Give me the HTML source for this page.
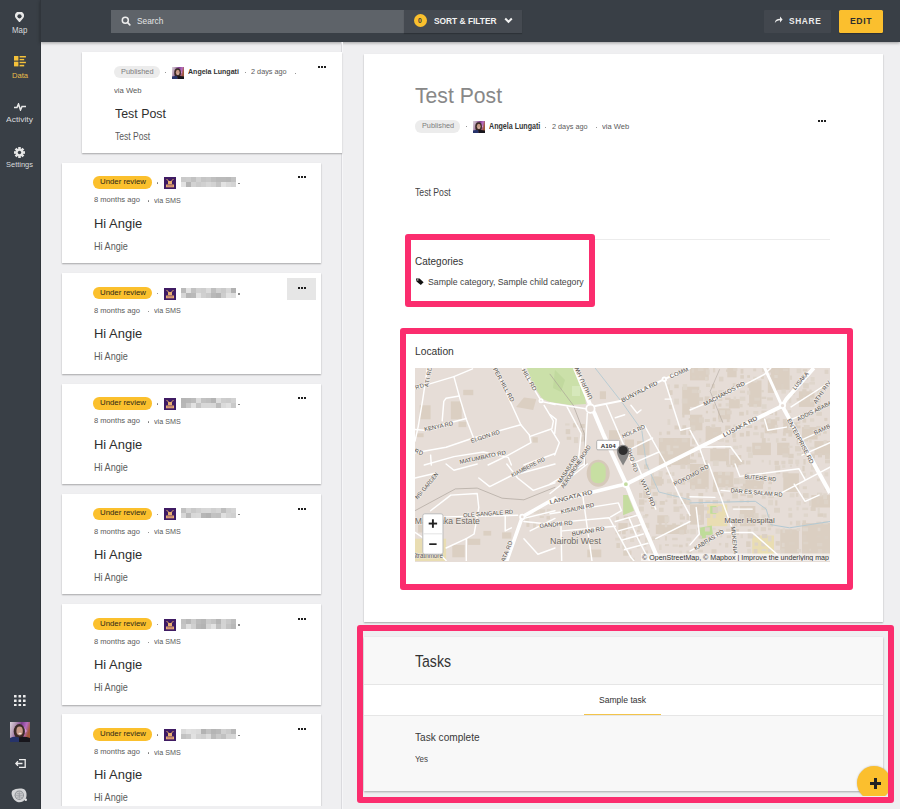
<!DOCTYPE html>
<html><head><meta charset="utf-8"><style>
*{margin:0;padding:0;box-sizing:border-box}
html,body{width:900px;height:809px;overflow:hidden;background:#efeff1;font-family:"Liberation Sans",sans-serif;position:relative}
.a{position:absolute}
.t{position:absolute;white-space:nowrap;line-height:1}
.card{position:absolute;background:#fff;box-shadow:0 1px 1.5px rgba(0,0,0,.3)}
.pink{position:absolute;border:6.5px solid #fb2d6e;border-radius:3px}
.dt{position:absolute;width:1.3px;height:1.3px;background:#777;border-radius:50%}
</style></head><body>
<div class="a" style="left:0;top:0;width:40px;height:809px;background:#393f46"></div>
<div class="a" style="left:40px;top:0;width:860px;height:42px;background:#393f46;box-shadow:0 1px 3px rgba(0,0,0,.35)"></div>
<div class="a" style="left:39.5px;top:0;width:1.2px;height:809px;background:#30353b"></div>
<div class="a" style="left:111px;top:10px;width:293px;height:23px;background:#5e6369"></div>
<svg class="a" style="left:121px;top:16px" width="10" height="10" viewBox="0 0 10 10"><circle cx="4.3" cy="4.3" r="3" fill="none" stroke="#eee" stroke-width="1.5"/><path d="M6.5 6.5 L8.8 8.8" stroke="#eee" stroke-width="1.7" stroke-linecap="round"/></svg>
<div class="t" style="left:136.70px;top:16.01px;font-size:9.81px;letter-spacing:0.000px;transform:scaleX(0.8453);transform-origin:0 0;color:#e4e5e6;">Search</div>
<div class="a" style="left:404px;top:10px;width:118px;height:23px;background:#454a51;box-shadow:0 1px 1px rgba(0,0,0,.2)"></div>
<div class="a" style="left:413.8px;top:14.3px;width:13px;height:13px;border-radius:50%;background:#fbc02d"></div>
<div class="t" style="left:418.40px;top:17.40px;font-size:7.27px;letter-spacing:0.000px;transform:scaleX(0.9421);transform-origin:0 0;color:#3a3a3a;font-weight:bold;">0</div>
<div class="t" style="left:433.70px;top:15.75px;font-size:9.63px;letter-spacing:0.000px;transform:scaleX(0.8688);transform-origin:0 0;color:#f2f2f2;font-weight:bold;">SORT &amp; FILTER</div>
<svg class="a" style="left:504px;top:17px" width="9" height="7" viewBox="0 0 9 7"><path d="M1.2 1.5 L4.5 4.8 L7.8 1.5" fill="none" stroke="#f2f2f2" stroke-width="2"/></svg>
<div class="a" style="left:764px;top:10px;width:67px;height:23px;background:#42474e;border-radius:1px"></div>
<svg class="a" style="left:774px;top:16px" width="9" height="8" viewBox="0 0 9 8"><path d="M0.8 7.2 C1 4 3 2.8 6 2.8 L6 0.6 L8.6 3.6 L6 6.4 L6 4.3 C3.8 4.3 2 5 0.8 7.2Z" fill="#eee"/></svg>
<div class="t" style="left:788.70px;top:16.86px;font-size:9.20px;letter-spacing:0.700px;transform:scaleX(0.9074);transform-origin:0 0;color:#ebebeb;font-weight:600;">SHARE</div>
<div class="a" style="left:839px;top:9.5px;width:44px;height:23.5px;background:#fbbf2e;border-radius:1.5px;box-shadow:0 1px 1px rgba(0,0,0,.25)"></div>
<div class="t" style="left:849.50px;top:15.57px;font-size:9.40px;letter-spacing:0.600px;transform:scaleX(0.9254);transform-origin:0 0;color:#2e2e2e;font-weight:bold;">EDIT</div>
<svg class="a" style="left:15.4px;top:11.6px" width="9" height="10.6" viewBox="0 0 9 10.6"><path d="M4.5 10.6 L1.1 6.4 A4.4 4.4 0 1 1 7.9 6.4 Z" fill="#e8e8e8"/><circle cx="4.5" cy="4.3" r="2.1" fill="#393f46"/></svg>
<div class="t" style="left:12.00px;top:27.47px;font-size:8.16px;letter-spacing:0.000px;transform:scaleX(0.9641);transform-origin:0 0;color:#d8dadc;">Map</div>
<svg class="a" style="left:13.9px;top:56.4px" width="12" height="10.4" viewBox="0 0 12 10.4" fill="#f5c23a"><rect x="0" y="0" width="4.4" height="4.6"/><rect x="0" y="5.7" width="4.4" height="4.7"/><rect x="5.6" y="0" width="6.3" height="1.5"/><rect x="5.6" y="2.9" width="4.6" height="1.4"/><rect x="5.6" y="5.8" width="6.3" height="1.4"/><rect x="5.6" y="8.8" width="4.6" height="1.6"/></svg>
<div class="t" style="left:11.70px;top:72.28px;font-size:7.88px;letter-spacing:0.000px;transform:scaleX(0.9661);transform-origin:0 0;color:#e9bd4a;">Data</div>
<svg class="a" style="left:14px;top:103px" width="12" height="8" viewBox="0 0 12 8"><path d="M0 4.5 L3 4.5 L4.5 1 L6.5 7 L8 3.5 L12 3.5" fill="none" stroke="#e8e8e8" stroke-width="1.5"/></svg>
<div class="t" style="left:6.10px;top:116.10px;font-size:7.99px;letter-spacing:0.000px;transform:scaleX(1.0633);transform-origin:0 0;color:#d8dadc;">Activity</div>
<svg class="a" style="left:14.3px;top:146.7px" width="11" height="11" viewBox="0 0 11 11"><g transform="translate(5.5 5.5)" fill="#e6e6e6"><circle r="3.8"/><rect x="-1.3" y="-5.5" width="2.6" height="11"/><rect x="-1.3" y="-5.5" width="2.6" height="11" transform="rotate(45)"/><rect x="-1.3" y="-5.5" width="2.6" height="11" transform="rotate(90)"/><rect x="-1.3" y="-5.5" width="2.6" height="11" transform="rotate(135)"/><circle r="1.7" fill="#393f46"/></g></svg>
<div class="t" style="left:6.10px;top:161.45px;font-size:7.84px;letter-spacing:0.000px;transform:scaleX(0.9531);transform-origin:0 0;color:#d8dadc;">Settings</div>
<svg class="a" style="left:14.2px;top:694.6px" width="11.6" height="11.6" viewBox="0 0 11.6 11.6" fill="#eee"><rect x="0.0" y="0.0" width="2.6" height="2.6" rx="0.3"/><rect x="0.0" y="4.5" width="2.6" height="2.6" rx="0.3"/><rect x="0.0" y="9.0" width="2.6" height="2.6" rx="0.3"/><rect x="4.5" y="0.0" width="2.6" height="2.6" rx="0.3"/><rect x="4.5" y="4.5" width="2.6" height="2.6" rx="0.3"/><rect x="4.5" y="9.0" width="2.6" height="2.6" rx="0.3"/><rect x="9.0" y="0.0" width="2.6" height="2.6" rx="0.3"/><rect x="9.0" y="4.5" width="2.6" height="2.6" rx="0.3"/><rect x="9.0" y="9.0" width="2.6" height="2.6" rx="0.3"/></svg>
<svg class="a" style="left:9.5px;top:722.2px" width="20" height="20" viewBox="0 0 20 20"><defs><linearGradient id="ag" x1="0" y1="0" x2="1" y2="0.3"><stop offset="0" stop-color="#dcd2dc"/><stop offset="0.25" stop-color="#b9a0b8"/><stop offset="0.55" stop-color="#7d3f8f"/><stop offset="0.8" stop-color="#b76cc0"/><stop offset="1" stop-color="#a0583a"/></linearGradient></defs><rect width="20" height="20" fill="url(#ag)"/><path d="M13 4 L17 9 L15 11 L12 8Z" fill="#d9a0dc" opacity=".8"/><ellipse cx="9.3" cy="9.5" rx="5.6" ry="7.5" fill="#3b2a26"/><ellipse cx="9.6" cy="9" rx="3.2" ry="4.4" fill="#c79a88"/><ellipse cx="10" cy="11.5" rx="1.6" ry="0.8" fill="#f2e4dc"/><path d="M0 20 L0 16 C3 14.5 6 14.5 9 15.5 L9 20Z" fill="#26336a"/><path d="M9 20 L9 15.5 C12 14.5 16 14.5 20 16 L20 20Z" fill="#17161c"/></svg>
<svg class="a" style="left:14.5px;top:758.8px" width="11" height="9" viewBox="0 0 11 9"><path d="M4 0.7 L10.2 0.7 L10.2 8.3 L4 8.3" fill="none" stroke="#eee" stroke-width="1.3"/><path d="M7.5 4.5 L0.8 4.5 M3 2.2 L0.8 4.5 L3 6.8" fill="none" stroke="#eee" stroke-width="1.3"/></svg>
<svg class="a" style="left:11px;top:787.5px" width="17" height="15" viewBox="0 0 17 15"><path d="M1.5 2.5 C4 0.6 9 0 12.5 1 C15.5 2.2 16.2 6.5 15 10 C13.5 13.5 9.5 14.8 6.5 14 C3.5 13 1.2 9.5 0.6 6 C0.5 4.5 0.8 3.3 1.5 2.5Z" fill="#d4d5d7"/><circle cx="8.3" cy="7.3" r="4.7" fill="#8d9196"/><circle cx="8.3" cy="7.3" r="3.7" fill="#c9cacc"/><path d="M4.8 7.3 H11.8 M8.3 3.8 V10.8 M5.6 5 C7 6 9.6 6 11 5 M5.6 9.6 C7 8.6 9.6 8.6 11 9.6" stroke="#8d9196" stroke-width="0.6" fill="none"/><circle cx="14.8" cy="11.8" r="1.2" fill="#e6e6e6"/></svg>
<div class="a" style="left:341px;top:42px;width:1.2px;height:767px;background:#dadade"></div><div class="a" style="left:342.2px;top:42px;width:1px;height:767px;background:#f6f6f8"></div>
<div class="card" style="left:82px;top:52px;width:259.5px;height:100.5px"></div>
<div class="a" style="left:114.2px;top:66.2px;width:45.5px;height:12.3px;border-radius:6.2px;background:#ececec"></div>
<div class="t" style="left:120.80px;top:68.15px;font-size:7.82px;letter-spacing:0.000px;transform:scaleX(0.9471);transform-origin:0 0;color:#7c7c7c;">Published</div>
<div class="dt" style="left:165.15px;top:71.95px"></div>
<svg class="a" style="left:172px;top:66.5px" width="12" height="12" viewBox="0 0 20 20"><defs><linearGradient id="ag" x1="0" y1="0" x2="1" y2="0.3"><stop offset="0" stop-color="#dcd2dc"/><stop offset="0.25" stop-color="#b9a0b8"/><stop offset="0.55" stop-color="#7d3f8f"/><stop offset="0.8" stop-color="#b76cc0"/><stop offset="1" stop-color="#a0583a"/></linearGradient></defs><rect width="20" height="20" fill="url(#ag)"/><path d="M13 4 L17 9 L15 11 L12 8Z" fill="#d9a0dc" opacity=".8"/><ellipse cx="9.3" cy="9.5" rx="5.6" ry="7.5" fill="#3b2a26"/><ellipse cx="9.6" cy="9" rx="3.2" ry="4.4" fill="#c79a88"/><ellipse cx="10" cy="11.5" rx="1.6" ry="0.8" fill="#f2e4dc"/><path d="M0 20 L0 16 C3 14.5 6 14.5 9 15.5 L9 20Z" fill="#26336a"/><path d="M9 20 L9 15.5 C12 14.5 16 14.5 20 16 L20 20Z" fill="#17161c"/></svg>
<div class="t" style="left:188.00px;top:67.79px;font-size:7.51px;letter-spacing:0.000px;transform:scaleX(0.9391);transform-origin:0 0;color:#333;font-weight:bold;">Angela Lungati</div>
<div class="dt" style="left:244.55px;top:72.05px"></div>
<div class="t" style="left:251.00px;top:68.42px;font-size:7.89px;letter-spacing:0.000px;transform:scaleX(0.9249);transform-origin:0 0;color:#5a5a5a;">2 days ago</div>
<div class="dt" style="left:294.85px;top:72.65px"></div>
<div class="a" style="left:318px;top:65.8px;width:2.2px;height:2.2px;background:#1e1e1e"></div><div class="a" style="left:321px;top:65.8px;width:2.2px;height:2.2px;background:#1e1e1e"></div><div class="a" style="left:324px;top:65.8px;width:2.2px;height:2.2px;background:#1e1e1e"></div>
<div class="t" style="left:114.20px;top:86.67px;font-size:7.39px;letter-spacing:0.000px;transform:scaleX(1.0388);transform-origin:0 0;color:#5a5a5a;">via Web</div>
<div class="t" style="left:114.70px;top:106.99px;font-size:13.69px;letter-spacing:0.000px;transform:scaleX(0.9054);transform-origin:0 0;color:#2e2e2e;">Test Post</div>
<div class="t" style="left:114.70px;top:132.43px;font-size:10.10px;letter-spacing:0.000px;transform:scaleX(0.8473);transform-origin:0 0;color:#5a5a5a;">Test Post</div>
<div class="card" style="left:61.5px;top:162.5px;width:259.5px;height:100.5px"></div>
<div class="a" style="left:93px;top:176.4px;width:59.2px;height:12.5px;border-radius:6.25px;background:#fbc02d"></div>
<div class="t" style="left:100.00px;top:178.01px;font-size:7.63px;letter-spacing:0.000px;transform:scaleX(1.0225);transform-origin:0 0;color:#2b2817;">Under review</div>
<div class="dt" style="left:156.75px;top:182.45px"></div>
<svg class="a" style="left:163.9px;top:177.0px" width="12" height="12" viewBox="0 0 12 12"><rect width="12" height="12" fill="#3f1b63"/><path d="M2.5 2 L5 4.5 M9.5 2 L7 4.5" stroke="#e0a868" stroke-width="1"/><rect x="4" y="4" width="4" height="3.2" fill="#e7b070"/><rect x="2" y="7.5" width="8" height="2.8" fill="#e7b070"/><rect x="3" y="8.3" width="6" height="1.1" fill="#c07870"/></svg>
<div class="a" style="left:180.5px;top:177.0px;width:55px;height:10px;overflow:hidden"><div class="a" style="left:0px;top:0px;width:5px;height:5px;background:rgb(202,202,202)"></div><div class="a" style="left:0px;top:5px;width:5px;height:5px;background:rgb(226,226,226)"></div><div class="a" style="left:5px;top:0px;width:5px;height:5px;background:rgb(204,204,204)"></div><div class="a" style="left:5px;top:5px;width:5px;height:5px;background:rgb(180,180,180)"></div><div class="a" style="left:10px;top:0px;width:5px;height:5px;background:rgb(194,194,194)"></div><div class="a" style="left:10px;top:5px;width:5px;height:5px;background:rgb(210,210,210)"></div><div class="a" style="left:15px;top:0px;width:5px;height:5px;background:rgb(209,209,209)"></div><div class="a" style="left:15px;top:5px;width:5px;height:5px;background:rgb(203,203,203)"></div><div class="a" style="left:20px;top:0px;width:5px;height:5px;background:rgb(197,197,197)"></div><div class="a" style="left:20px;top:5px;width:5px;height:5px;background:rgb(208,208,208)"></div><div class="a" style="left:25px;top:0px;width:5px;height:5px;background:rgb(200,200,200)"></div><div class="a" style="left:25px;top:5px;width:5px;height:5px;background:rgb(215,215,215)"></div><div class="a" style="left:30px;top:0px;width:5px;height:5px;background:rgb(191,191,191)"></div><div class="a" style="left:30px;top:5px;width:5px;height:5px;background:rgb(210,210,210)"></div><div class="a" style="left:35px;top:0px;width:5px;height:5px;background:rgb(186,186,186)"></div><div class="a" style="left:35px;top:5px;width:5px;height:5px;background:rgb(196,196,196)"></div><div class="a" style="left:40px;top:0px;width:5px;height:5px;background:rgb(186,186,186)"></div><div class="a" style="left:40px;top:5px;width:5px;height:5px;background:rgb(226,226,226)"></div><div class="a" style="left:45px;top:0px;width:5px;height:5px;background:rgb(184,184,184)"></div><div class="a" style="left:45px;top:5px;width:5px;height:5px;background:rgb(217,217,217)"></div><div class="a" style="left:50px;top:0px;width:5px;height:5px;background:rgb(194,194,194)"></div><div class="a" style="left:50px;top:5px;width:5px;height:5px;background:rgb(212,212,212)"></div></div>
<div class="dt" style="left:238.35px;top:182.95px"></div>
<div class="a" style="left:297.6px;top:176.3px;width:2.2px;height:2.2px;background:#1e1e1e"></div><div class="a" style="left:300.6px;top:176.3px;width:2.2px;height:2.2px;background:#1e1e1e"></div><div class="a" style="left:303.6px;top:176.3px;width:2.2px;height:2.2px;background:#1e1e1e"></div>
<div class="t" style="left:93.80px;top:196.34px;font-size:7.87px;letter-spacing:0.000px;transform:scaleX(0.9626);transform-origin:0 0;color:#5a5a5a;">8 months ago</div>
<div class="dt" style="left:147.65px;top:200.45px"></div>
<div class="t" style="left:154.10px;top:196.84px;font-size:7.75px;letter-spacing:0.000px;transform:scaleX(0.9253);transform-origin:0 0;color:#5a5a5a;">via SMS</div>
<div class="t" style="left:93.70px;top:216.68px;font-size:13.56px;letter-spacing:0.000px;transform:scaleX(0.9565);transform-origin:0 0;color:#2e2e2e;">Hi Angie</div>
<div class="t" style="left:93.70px;top:242.09px;font-size:10.05px;letter-spacing:0.000px;transform:scaleX(0.9031);transform-origin:0 0;color:#5a5a5a;">Hi Angie</div>
<div class="card" style="left:61.5px;top:273px;width:259.5px;height:100.5px"></div>
<div class="a" style="left:287px;top:278px;width:29px;height:22px;background:#e6e6e6"></div>
<div class="a" style="left:93px;top:286.9px;width:59.2px;height:12.5px;border-radius:6.25px;background:#fbc02d"></div>
<div class="t" style="left:100.00px;top:288.76px;font-size:7.63px;letter-spacing:0.000px;transform:scaleX(1.0225);transform-origin:0 0;color:#2b2817;">Under review</div>
<div class="dt" style="left:156.75px;top:292.95px"></div>
<svg class="a" style="left:163.9px;top:287.5px" width="12" height="12" viewBox="0 0 12 12"><rect width="12" height="12" fill="#3f1b63"/><path d="M2.5 2 L5 4.5 M9.5 2 L7 4.5" stroke="#e0a868" stroke-width="1"/><rect x="4" y="4" width="4" height="3.2" fill="#e7b070"/><rect x="2" y="7.5" width="8" height="2.8" fill="#e7b070"/><rect x="3" y="8.3" width="6" height="1.1" fill="#c07870"/></svg>
<div class="a" style="left:180.5px;top:287.5px;width:55px;height:10px;overflow:hidden"><div class="a" style="left:0px;top:0px;width:5px;height:5px;background:rgb(186,186,186)"></div><div class="a" style="left:0px;top:5px;width:5px;height:5px;background:rgb(214,214,214)"></div><div class="a" style="left:5px;top:0px;width:5px;height:5px;background:rgb(226,226,226)"></div><div class="a" style="left:5px;top:5px;width:5px;height:5px;background:rgb(182,182,182)"></div><div class="a" style="left:10px;top:0px;width:5px;height:5px;background:rgb(194,194,194)"></div><div class="a" style="left:10px;top:5px;width:5px;height:5px;background:rgb(185,185,185)"></div><div class="a" style="left:15px;top:0px;width:5px;height:5px;background:rgb(209,209,209)"></div><div class="a" style="left:15px;top:5px;width:5px;height:5px;background:rgb(226,226,226)"></div><div class="a" style="left:20px;top:0px;width:5px;height:5px;background:rgb(206,206,206)"></div><div class="a" style="left:20px;top:5px;width:5px;height:5px;background:rgb(208,208,208)"></div><div class="a" style="left:25px;top:0px;width:5px;height:5px;background:rgb(219,219,219)"></div><div class="a" style="left:25px;top:5px;width:5px;height:5px;background:rgb(202,202,202)"></div><div class="a" style="left:30px;top:0px;width:5px;height:5px;background:rgb(191,191,191)"></div><div class="a" style="left:30px;top:5px;width:5px;height:5px;background:rgb(184,184,184)"></div><div class="a" style="left:35px;top:0px;width:5px;height:5px;background:rgb(209,209,209)"></div><div class="a" style="left:35px;top:5px;width:5px;height:5px;background:rgb(179,179,179)"></div><div class="a" style="left:40px;top:0px;width:5px;height:5px;background:rgb(202,202,202)"></div><div class="a" style="left:40px;top:5px;width:5px;height:5px;background:rgb(205,205,205)"></div><div class="a" style="left:45px;top:0px;width:5px;height:5px;background:rgb(216,216,216)"></div><div class="a" style="left:45px;top:5px;width:5px;height:5px;background:rgb(226,226,226)"></div><div class="a" style="left:50px;top:0px;width:5px;height:5px;background:rgb(178,178,178)"></div><div class="a" style="left:50px;top:5px;width:5px;height:5px;background:rgb(222,222,222)"></div></div>
<div class="dt" style="left:238.35px;top:293.45px"></div>
<div class="a" style="left:297.6px;top:286.8px;width:2.2px;height:2.2px;background:#1e1e1e"></div><div class="a" style="left:300.6px;top:286.8px;width:2.2px;height:2.2px;background:#1e1e1e"></div><div class="a" style="left:303.6px;top:286.8px;width:2.2px;height:2.2px;background:#1e1e1e"></div>
<div class="t" style="left:93.80px;top:307.09px;font-size:7.87px;letter-spacing:0.000px;transform:scaleX(0.9626);transform-origin:0 0;color:#5a5a5a;">8 months ago</div>
<div class="dt" style="left:147.65px;top:310.95px"></div>
<div class="t" style="left:154.10px;top:307.09px;font-size:7.75px;letter-spacing:0.000px;transform:scaleX(0.9253);transform-origin:0 0;color:#5a5a5a;">via SMS</div>
<div class="t" style="left:93.70px;top:327.43px;font-size:13.56px;letter-spacing:0.000px;transform:scaleX(0.9565);transform-origin:0 0;color:#2e2e2e;">Hi Angie</div>
<div class="t" style="left:93.70px;top:352.34px;font-size:10.05px;letter-spacing:0.000px;transform:scaleX(0.9031);transform-origin:0 0;color:#5a5a5a;">Hi Angie</div>
<div class="card" style="left:61.5px;top:383.5px;width:259.5px;height:100.5px"></div>
<div class="a" style="left:93px;top:397.4px;width:59.2px;height:12.5px;border-radius:6.25px;background:#fbc02d"></div>
<div class="t" style="left:100.00px;top:399.01px;font-size:7.63px;letter-spacing:0.000px;transform:scaleX(1.0225);transform-origin:0 0;color:#2b2817;">Under review</div>
<div class="dt" style="left:156.75px;top:403.45px"></div>
<svg class="a" style="left:163.9px;top:398.0px" width="12" height="12" viewBox="0 0 12 12"><rect width="12" height="12" fill="#3f1b63"/><path d="M2.5 2 L5 4.5 M9.5 2 L7 4.5" stroke="#e0a868" stroke-width="1"/><rect x="4" y="4" width="4" height="3.2" fill="#e7b070"/><rect x="2" y="7.5" width="8" height="2.8" fill="#e7b070"/><rect x="3" y="8.3" width="6" height="1.1" fill="#c07870"/></svg>
<div class="a" style="left:180.5px;top:398.0px;width:55px;height:10px;overflow:hidden"><div class="a" style="left:0px;top:0px;width:5px;height:5px;background:rgb(181,181,181)"></div><div class="a" style="left:0px;top:5px;width:5px;height:5px;background:rgb(183,183,183)"></div><div class="a" style="left:5px;top:0px;width:5px;height:5px;background:rgb(183,183,183)"></div><div class="a" style="left:5px;top:5px;width:5px;height:5px;background:rgb(201,201,201)"></div><div class="a" style="left:10px;top:0px;width:5px;height:5px;background:rgb(188,188,188)"></div><div class="a" style="left:10px;top:5px;width:5px;height:5px;background:rgb(225,225,225)"></div><div class="a" style="left:15px;top:0px;width:5px;height:5px;background:rgb(220,220,220)"></div><div class="a" style="left:15px;top:5px;width:5px;height:5px;background:rgb(197,197,197)"></div><div class="a" style="left:20px;top:0px;width:5px;height:5px;background:rgb(194,194,194)"></div><div class="a" style="left:20px;top:5px;width:5px;height:5px;background:rgb(216,216,216)"></div><div class="a" style="left:25px;top:0px;width:5px;height:5px;background:rgb(191,191,191)"></div><div class="a" style="left:25px;top:5px;width:5px;height:5px;background:rgb(216,216,216)"></div><div class="a" style="left:30px;top:0px;width:5px;height:5px;background:rgb(180,180,180)"></div><div class="a" style="left:30px;top:5px;width:5px;height:5px;background:rgb(215,215,215)"></div><div class="a" style="left:35px;top:0px;width:5px;height:5px;background:rgb(221,221,221)"></div><div class="a" style="left:35px;top:5px;width:5px;height:5px;background:rgb(188,188,188)"></div><div class="a" style="left:40px;top:0px;width:5px;height:5px;background:rgb(205,205,205)"></div><div class="a" style="left:40px;top:5px;width:5px;height:5px;background:rgb(218,218,218)"></div><div class="a" style="left:45px;top:0px;width:5px;height:5px;background:rgb(203,203,203)"></div><div class="a" style="left:45px;top:5px;width:5px;height:5px;background:rgb(224,224,224)"></div><div class="a" style="left:50px;top:0px;width:5px;height:5px;background:rgb(210,210,210)"></div><div class="a" style="left:50px;top:5px;width:5px;height:5px;background:rgb(201,201,201)"></div></div>
<div class="dt" style="left:238.35px;top:403.95px"></div>
<div class="a" style="left:297.6px;top:397.3px;width:2.2px;height:2.2px;background:#1e1e1e"></div><div class="a" style="left:300.6px;top:397.3px;width:2.2px;height:2.2px;background:#1e1e1e"></div><div class="a" style="left:303.6px;top:397.3px;width:2.2px;height:2.2px;background:#1e1e1e"></div>
<div class="t" style="left:93.80px;top:417.34px;font-size:7.87px;letter-spacing:0.000px;transform:scaleX(0.9626);transform-origin:0 0;color:#5a5a5a;">8 months ago</div>
<div class="dt" style="left:147.65px;top:421.45px"></div>
<div class="t" style="left:154.10px;top:417.84px;font-size:7.75px;letter-spacing:0.000px;transform:scaleX(0.9253);transform-origin:0 0;color:#5a5a5a;">via SMS</div>
<div class="t" style="left:93.70px;top:437.68px;font-size:13.56px;letter-spacing:0.000px;transform:scaleX(0.9565);transform-origin:0 0;color:#2e2e2e;">Hi Angie</div>
<div class="t" style="left:93.70px;top:463.09px;font-size:10.05px;letter-spacing:0.000px;transform:scaleX(0.9031);transform-origin:0 0;color:#5a5a5a;">Hi Angie</div>
<div class="card" style="left:61.5px;top:493.7px;width:259.5px;height:100.5px"></div>
<div class="a" style="left:93px;top:507.6px;width:59.2px;height:12.5px;border-radius:6.25px;background:#fbc02d"></div>
<div class="t" style="left:100.00px;top:509.21px;font-size:7.63px;letter-spacing:0.000px;transform:scaleX(1.0225);transform-origin:0 0;color:#2b2817;">Under review</div>
<div class="dt" style="left:156.75px;top:513.65px"></div>
<svg class="a" style="left:163.9px;top:508.2px" width="12" height="12" viewBox="0 0 12 12"><rect width="12" height="12" fill="#3f1b63"/><path d="M2.5 2 L5 4.5 M9.5 2 L7 4.5" stroke="#e0a868" stroke-width="1"/><rect x="4" y="4" width="4" height="3.2" fill="#e7b070"/><rect x="2" y="7.5" width="8" height="2.8" fill="#e7b070"/><rect x="3" y="8.3" width="6" height="1.1" fill="#c07870"/></svg>
<div class="a" style="left:180.5px;top:508.2px;width:55px;height:10px;overflow:hidden"><div class="a" style="left:0px;top:0px;width:5px;height:5px;background:rgb(193,193,193)"></div><div class="a" style="left:0px;top:5px;width:5px;height:5px;background:rgb(215,215,215)"></div><div class="a" style="left:5px;top:0px;width:5px;height:5px;background:rgb(212,212,212)"></div><div class="a" style="left:5px;top:5px;width:5px;height:5px;background:rgb(186,186,186)"></div><div class="a" style="left:10px;top:0px;width:5px;height:5px;background:rgb(201,201,201)"></div><div class="a" style="left:10px;top:5px;width:5px;height:5px;background:rgb(216,216,216)"></div><div class="a" style="left:15px;top:0px;width:5px;height:5px;background:rgb(208,208,208)"></div><div class="a" style="left:15px;top:5px;width:5px;height:5px;background:rgb(218,218,218)"></div><div class="a" style="left:20px;top:0px;width:5px;height:5px;background:rgb(215,215,215)"></div><div class="a" style="left:20px;top:5px;width:5px;height:5px;background:rgb(182,182,182)"></div><div class="a" style="left:25px;top:0px;width:5px;height:5px;background:rgb(216,216,216)"></div><div class="a" style="left:25px;top:5px;width:5px;height:5px;background:rgb(178,178,178)"></div><div class="a" style="left:30px;top:0px;width:5px;height:5px;background:rgb(208,208,208)"></div><div class="a" style="left:30px;top:5px;width:5px;height:5px;background:rgb(194,194,194)"></div><div class="a" style="left:35px;top:0px;width:5px;height:5px;background:rgb(213,213,213)"></div><div class="a" style="left:35px;top:5px;width:5px;height:5px;background:rgb(192,192,192)"></div><div class="a" style="left:40px;top:0px;width:5px;height:5px;background:rgb(190,190,190)"></div><div class="a" style="left:40px;top:5px;width:5px;height:5px;background:rgb(223,223,223)"></div><div class="a" style="left:45px;top:0px;width:5px;height:5px;background:rgb(208,208,208)"></div><div class="a" style="left:45px;top:5px;width:5px;height:5px;background:rgb(212,212,212)"></div><div class="a" style="left:50px;top:0px;width:5px;height:5px;background:rgb(213,213,213)"></div><div class="a" style="left:50px;top:5px;width:5px;height:5px;background:rgb(208,208,208)"></div></div>
<div class="dt" style="left:238.35px;top:514.15px"></div>
<div class="a" style="left:297.6px;top:507.5px;width:2.2px;height:2.2px;background:#1e1e1e"></div><div class="a" style="left:300.6px;top:507.5px;width:2.2px;height:2.2px;background:#1e1e1e"></div><div class="a" style="left:303.6px;top:507.5px;width:2.2px;height:2.2px;background:#1e1e1e"></div>
<div class="t" style="left:93.80px;top:527.54px;font-size:7.87px;letter-spacing:0.000px;transform:scaleX(0.9626);transform-origin:0 0;color:#5a5a5a;">8 months ago</div>
<div class="dt" style="left:147.65px;top:531.65px"></div>
<div class="t" style="left:154.10px;top:527.54px;font-size:7.75px;letter-spacing:0.000px;transform:scaleX(0.9253);transform-origin:0 0;color:#5a5a5a;">via SMS</div>
<div class="t" style="left:93.70px;top:548.38px;font-size:13.56px;letter-spacing:0.000px;transform:scaleX(0.9565);transform-origin:0 0;color:#2e2e2e;">Hi Angie</div>
<div class="t" style="left:93.70px;top:572.79px;font-size:10.05px;letter-spacing:0.000px;transform:scaleX(0.9031);transform-origin:0 0;color:#5a5a5a;">Hi Angie</div>
<div class="card" style="left:61.5px;top:604px;width:259.5px;height:100.5px"></div>
<div class="a" style="left:93px;top:617.9px;width:59.2px;height:12.5px;border-radius:6.25px;background:#fbc02d"></div>
<div class="t" style="left:100.00px;top:619.76px;font-size:7.63px;letter-spacing:0.000px;transform:scaleX(1.0225);transform-origin:0 0;color:#2b2817;">Under review</div>
<div class="dt" style="left:156.75px;top:623.95px"></div>
<svg class="a" style="left:163.9px;top:618.5px" width="12" height="12" viewBox="0 0 12 12"><rect width="12" height="12" fill="#3f1b63"/><path d="M2.5 2 L5 4.5 M9.5 2 L7 4.5" stroke="#e0a868" stroke-width="1"/><rect x="4" y="4" width="4" height="3.2" fill="#e7b070"/><rect x="2" y="7.5" width="8" height="2.8" fill="#e7b070"/><rect x="3" y="8.3" width="6" height="1.1" fill="#c07870"/></svg>
<div class="a" style="left:180.5px;top:618.5px;width:55px;height:10px;overflow:hidden"><div class="a" style="left:0px;top:0px;width:5px;height:5px;background:rgb(193,193,193)"></div><div class="a" style="left:0px;top:5px;width:5px;height:5px;background:rgb(197,197,197)"></div><div class="a" style="left:5px;top:0px;width:5px;height:5px;background:rgb(184,184,184)"></div><div class="a" style="left:5px;top:5px;width:5px;height:5px;background:rgb(224,224,224)"></div><div class="a" style="left:10px;top:0px;width:5px;height:5px;background:rgb(203,203,203)"></div><div class="a" style="left:10px;top:5px;width:5px;height:5px;background:rgb(208,208,208)"></div><div class="a" style="left:15px;top:0px;width:5px;height:5px;background:rgb(187,187,187)"></div><div class="a" style="left:15px;top:5px;width:5px;height:5px;background:rgb(183,183,183)"></div><div class="a" style="left:20px;top:0px;width:5px;height:5px;background:rgb(182,182,182)"></div><div class="a" style="left:20px;top:5px;width:5px;height:5px;background:rgb(179,179,179)"></div><div class="a" style="left:25px;top:0px;width:5px;height:5px;background:rgb(203,203,203)"></div><div class="a" style="left:25px;top:5px;width:5px;height:5px;background:rgb(213,213,213)"></div><div class="a" style="left:30px;top:0px;width:5px;height:5px;background:rgb(196,196,196)"></div><div class="a" style="left:30px;top:5px;width:5px;height:5px;background:rgb(226,226,226)"></div><div class="a" style="left:35px;top:0px;width:5px;height:5px;background:rgb(181,181,181)"></div><div class="a" style="left:35px;top:5px;width:5px;height:5px;background:rgb(192,192,192)"></div><div class="a" style="left:40px;top:0px;width:5px;height:5px;background:rgb(211,211,211)"></div><div class="a" style="left:40px;top:5px;width:5px;height:5px;background:rgb(212,212,212)"></div><div class="a" style="left:45px;top:0px;width:5px;height:5px;background:rgb(201,201,201)"></div><div class="a" style="left:45px;top:5px;width:5px;height:5px;background:rgb(195,195,195)"></div><div class="a" style="left:50px;top:0px;width:5px;height:5px;background:rgb(189,189,189)"></div><div class="a" style="left:50px;top:5px;width:5px;height:5px;background:rgb(184,184,184)"></div></div>
<div class="dt" style="left:238.35px;top:624.45px"></div>
<div class="a" style="left:297.6px;top:617.8px;width:2.2px;height:2.2px;background:#1e1e1e"></div><div class="a" style="left:300.6px;top:617.8px;width:2.2px;height:2.2px;background:#1e1e1e"></div><div class="a" style="left:303.6px;top:617.8px;width:2.2px;height:2.2px;background:#1e1e1e"></div>
<div class="t" style="left:93.80px;top:638.09px;font-size:7.87px;letter-spacing:0.000px;transform:scaleX(0.9626);transform-origin:0 0;color:#5a5a5a;">8 months ago</div>
<div class="dt" style="left:147.65px;top:641.95px"></div>
<div class="t" style="left:154.10px;top:638.09px;font-size:7.75px;letter-spacing:0.000px;transform:scaleX(0.9253);transform-origin:0 0;color:#5a5a5a;">via SMS</div>
<div class="t" style="left:93.70px;top:658.43px;font-size:13.56px;letter-spacing:0.000px;transform:scaleX(0.9565);transform-origin:0 0;color:#2e2e2e;">Hi Angie</div>
<div class="t" style="left:93.70px;top:683.34px;font-size:10.05px;letter-spacing:0.000px;transform:scaleX(0.9031);transform-origin:0 0;color:#5a5a5a;">Hi Angie</div>
<div class="card" style="left:61.5px;top:714.3px;width:259.5px;height:100.5px"></div>
<div class="a" style="left:93px;top:728.2px;width:59.2px;height:12.5px;border-radius:6.25px;background:#fbc02d"></div>
<div class="t" style="left:100.00px;top:730.31px;font-size:7.63px;letter-spacing:0.000px;transform:scaleX(1.0225);transform-origin:0 0;color:#2b2817;">Under review</div>
<div class="dt" style="left:156.75px;top:734.25px"></div>
<svg class="a" style="left:163.9px;top:728.8px" width="12" height="12" viewBox="0 0 12 12"><rect width="12" height="12" fill="#3f1b63"/><path d="M2.5 2 L5 4.5 M9.5 2 L7 4.5" stroke="#e0a868" stroke-width="1"/><rect x="4" y="4" width="4" height="3.2" fill="#e7b070"/><rect x="2" y="7.5" width="8" height="2.8" fill="#e7b070"/><rect x="3" y="8.3" width="6" height="1.1" fill="#c07870"/></svg>
<div class="a" style="left:180.5px;top:728.8px;width:55px;height:10px;overflow:hidden"><div class="a" style="left:0px;top:0px;width:5px;height:5px;background:rgb(217,217,217)"></div><div class="a" style="left:0px;top:5px;width:5px;height:5px;background:rgb(194,194,194)"></div><div class="a" style="left:5px;top:0px;width:5px;height:5px;background:rgb(225,225,225)"></div><div class="a" style="left:5px;top:5px;width:5px;height:5px;background:rgb(200,200,200)"></div><div class="a" style="left:10px;top:0px;width:5px;height:5px;background:rgb(222,222,222)"></div><div class="a" style="left:10px;top:5px;width:5px;height:5px;background:rgb(225,225,225)"></div><div class="a" style="left:15px;top:0px;width:5px;height:5px;background:rgb(219,219,219)"></div><div class="a" style="left:15px;top:5px;width:5px;height:5px;background:rgb(211,211,211)"></div><div class="a" style="left:20px;top:0px;width:5px;height:5px;background:rgb(179,179,179)"></div><div class="a" style="left:20px;top:5px;width:5px;height:5px;background:rgb(207,207,207)"></div><div class="a" style="left:25px;top:0px;width:5px;height:5px;background:rgb(193,193,193)"></div><div class="a" style="left:25px;top:5px;width:5px;height:5px;background:rgb(219,219,219)"></div><div class="a" style="left:30px;top:0px;width:5px;height:5px;background:rgb(181,181,181)"></div><div class="a" style="left:30px;top:5px;width:5px;height:5px;background:rgb(188,188,188)"></div><div class="a" style="left:35px;top:0px;width:5px;height:5px;background:rgb(185,185,185)"></div><div class="a" style="left:35px;top:5px;width:5px;height:5px;background:rgb(201,201,201)"></div><div class="a" style="left:40px;top:0px;width:5px;height:5px;background:rgb(208,208,208)"></div><div class="a" style="left:40px;top:5px;width:5px;height:5px;background:rgb(193,193,193)"></div><div class="a" style="left:45px;top:0px;width:5px;height:5px;background:rgb(202,202,202)"></div><div class="a" style="left:45px;top:5px;width:5px;height:5px;background:rgb(212,212,212)"></div><div class="a" style="left:50px;top:0px;width:5px;height:5px;background:rgb(184,184,184)"></div><div class="a" style="left:50px;top:5px;width:5px;height:5px;background:rgb(214,214,214)"></div></div>
<div class="dt" style="left:238.35px;top:734.75px"></div>
<div class="a" style="left:297.6px;top:728.0999999999999px;width:2.2px;height:2.2px;background:#1e1e1e"></div><div class="a" style="left:300.6px;top:728.0999999999999px;width:2.2px;height:2.2px;background:#1e1e1e"></div><div class="a" style="left:303.6px;top:728.0999999999999px;width:2.2px;height:2.2px;background:#1e1e1e"></div>
<div class="t" style="left:93.80px;top:748.14px;font-size:7.87px;letter-spacing:0.000px;transform:scaleX(0.9626);transform-origin:0 0;color:#5a5a5a;">8 months ago</div>
<div class="dt" style="left:147.65px;top:752.25px"></div>
<div class="t" style="left:154.10px;top:748.64px;font-size:7.75px;letter-spacing:0.000px;transform:scaleX(0.9253);transform-origin:0 0;color:#5a5a5a;">via SMS</div>
<div class="t" style="left:93.70px;top:768.48px;font-size:13.56px;letter-spacing:0.000px;transform:scaleX(0.9565);transform-origin:0 0;color:#2e2e2e;">Hi Angie</div>
<div class="t" style="left:93.70px;top:793.39px;font-size:10.05px;letter-spacing:0.000px;transform:scaleX(0.9031);transform-origin:0 0;color:#5a5a5a;">Hi Angie</div>
<div class="a" style="left:40.7px;top:805.7px;width:300.3px;height:4px;background:#efeff1"></div>
<div class="card" style="left:364px;top:54px;width:519px;height:568px"></div>
<div class="t" style="left:415.10px;top:85.30px;font-size:22.53px;letter-spacing:0.000px;transform:scaleX(0.9404);transform-origin:0 0;color:#888;">Test Post</div>
<div class="a" style="left:415.1px;top:120.1px;width:45.3px;height:12.5px;border-radius:6.25px;background:#ececec"></div>
<div class="t" style="left:421.90px;top:122.24px;font-size:7.79px;letter-spacing:0.000px;transform:scaleX(0.9387);transform-origin:0 0;color:#7c7c7c;">Published</div>
<div class="dt" style="left:465.85px;top:125.95px"></div>
<svg class="a" style="left:472.5px;top:120.7px" width="12" height="12" viewBox="0 0 20 20"><defs><linearGradient id="ag" x1="0" y1="0" x2="1" y2="0.3"><stop offset="0" stop-color="#dcd2dc"/><stop offset="0.25" stop-color="#b9a0b8"/><stop offset="0.55" stop-color="#7d3f8f"/><stop offset="0.8" stop-color="#b76cc0"/><stop offset="1" stop-color="#a0583a"/></linearGradient></defs><rect width="20" height="20" fill="url(#ag)"/><path d="M13 4 L17 9 L15 11 L12 8Z" fill="#d9a0dc" opacity=".8"/><ellipse cx="9.3" cy="9.5" rx="5.6" ry="7.5" fill="#3b2a26"/><ellipse cx="9.6" cy="9" rx="3.2" ry="4.4" fill="#c79a88"/><ellipse cx="10" cy="11.5" rx="1.6" ry="0.8" fill="#f2e4dc"/><path d="M0 20 L0 16 C3 14.5 6 14.5 9 15.5 L9 20Z" fill="#26336a"/><path d="M9 20 L9 15.5 C12 14.5 16 14.5 20 16 L20 20Z" fill="#17161c"/></svg>
<div class="t" style="left:488.50px;top:123.48px;font-size:8.14px;letter-spacing:0.000px;transform:scaleX(0.8747);transform-origin:0 0;color:#333;font-weight:bold;">Angela Lungati</div>
<div class="dt" style="left:545.15px;top:126.55px"></div>
<div class="t" style="left:551.60px;top:123.21px;font-size:7.98px;letter-spacing:0.000px;transform:scaleX(0.9112);transform-origin:0 0;color:#5a5a5a;">2 days ago</div>
<div class="dt" style="left:595.75px;top:126.75px"></div>
<div class="t" style="left:602.10px;top:122.98px;font-size:7.66px;letter-spacing:0.000px;transform:scaleX(0.9874);transform-origin:0 0;color:#5a5a5a;">via Web</div>
<div class="a" style="left:817.7px;top:120px;width:2.2px;height:2.2px;background:#1e1e1e"></div><div class="a" style="left:820.7px;top:120px;width:2.2px;height:2.2px;background:#1e1e1e"></div><div class="a" style="left:823.7px;top:120px;width:2.2px;height:2.2px;background:#1e1e1e"></div>
<div class="t" style="left:415.00px;top:187.23px;font-size:10.74px;letter-spacing:0.000px;transform:scaleX(0.8076);transform-origin:0 0;color:#444;">Test Post</div>
<div class="a" style="left:415px;top:239px;width:415px;height:1px;background:#ececec"></div>
<div class="t" style="left:415.00px;top:254.52px;font-size:11.65px;letter-spacing:0.000px;transform:scaleX(0.8578);transform-origin:0 0;color:#333;">Categories</div>
<svg class="a" style="left:415.5px;top:278px" width="8" height="7" viewBox="0 0 8 7"><path d="M0 0.5 L3.5 0.5 L7.6 4.2 L4.8 7 L0.5 3.5Z" fill="#111"/><circle cx="1.8" cy="1.9" r="0.7" fill="#fff"/></svg>
<div class="t" style="left:427.80px;top:278.29px;font-size:9.34px;letter-spacing:0.000px;transform:scaleX(0.9365);transform-origin:0 0;color:#444;">Sample category, Sample child category</div>
<div class="t" style="left:415.10px;top:346.35px;font-size:11.22px;letter-spacing:0.000px;transform:scaleX(0.9149);transform-origin:0 0;color:#333;">Location</div>
<div id="map" class="a" style="left:415px;top:368px;width:415px;height:193.6px;background:#e6ddd7;overflow:hidden"><svg width="415" height="193" viewBox="0 0 415 193" style="position:absolute;left:0;top:0" font-family="Liberation Sans, sans-serif">
<rect width="415" height="194" fill="#e6ddd7"/>
<polygon points="112,0 160,0 169,22 171,36 155,37 135,34 127.5,31 118,17" fill="#cbe0a9"/>
<path d="M140 2 L150 12 L146 24 L138 20Z" fill="#bcd69a" opacity=".7"/><rect x="157" y="18" width="8" height="10" fill="#d6e8bb"/>
<rect x="0.0" y="170.7" width="31.1" height="22.4" fill="#e9ddb2"/>
<polygon points="101.1,38.9 108.9,29.5 121.3,31.1 118.2,42.0" fill="#dbcfc2"/>
<rect x="292.1" y="136.4" width="20.2" height="21.8" fill="#e9ddb2"/>
<rect x="295.2" y="138.0" width="6.2" height="7.8" fill="#bfdc9a"/>
<polygon points="284.3,159.8 296.8,157.4 298.3,169.1 285.9,170.7" fill="#bfdc9a"/>
<rect x="337.2" y="167.5" width="21.8" height="18.7" fill="#e9ddb2"/>
<polygon points="208.1,127.1 212.8,127.1 219.0,142.7 208.1,147.3" fill="#c5dca0"/>
<rect x="48.2" y="21.8" width="10.1" height="5.4" fill="#dbcfc2"/>
<rect x="4.7" y="37.3" width="10.9" height="14.0" fill="#dbcfc2"/>
<rect x="35.8" y="33.4" width="10.9" height="17.9" fill="#dbcfc2"/>
<rect x="117.4" y="69.2" width="5.4" height="5.4" fill="#dbcfc2"/>
<rect x="1.6" y="65.3" width="7.0" height="3.9" fill="#dbcfc2"/>
<rect x="43.5" y="53.7" width="7.8" height="5.4" fill="#dbcfc2"/>
<rect x="184.8" y="23.3" width="6.2" height="7.8" fill="#dbcfc2"/>
<rect x="194.1" y="62.2" width="10.9" height="9.3" fill="#dbcfc2"/>
<rect x="243.9" y="70.0" width="31.1" height="27.1" fill="#dbcfc2"/>
<rect x="267.2" y="18.7" width="7.8" height="28.0" fill="#dbcfc2"/>
<rect x="209.7" y="71.5" width="9.3" height="9.3" fill="#dbcfc2"/>
<rect x="222.1" y="73.1" width="12.4" height="14.0" fill="#dbcfc2"/>
<rect x="275.0" y="0.0" width="18.7" height="12.4" fill="#dbcfc2"/>
<rect x="275.0" y="18.7" width="9.3" height="20.2" fill="#dbcfc2"/>
<rect x="312.3" y="0.0" width="9.3" height="9.3" fill="#dbcfc2"/>
<rect x="334.1" y="12.4" width="12.4" height="26.4" fill="#dbcfc2"/>
<rect x="313.9" y="31.1" width="10.9" height="9.3" fill="#dbcfc2"/>
<rect x="303.0" y="40.4" width="12.4" height="10.9" fill="#dbcfc2"/>
<rect x="275.0" y="46.7" width="12.4" height="15.6" fill="#dbcfc2"/>
<rect x="290.6" y="59.1" width="15.6" height="14.0" fill="#dbcfc2"/>
<rect x="349.7" y="51.3" width="12.4" height="14.0" fill="#dbcfc2"/>
<rect x="368.3" y="54.4" width="14.0" height="10.9" fill="#dbcfc2"/>
<rect x="337.2" y="74.7" width="18.7" height="12.4" fill="#dbcfc2"/>
<rect x="362.1" y="74.7" width="12.4" height="12.4" fill="#dbcfc2"/>
<rect x="383.9" y="23.3" width="15.6" height="15.6" fill="#dbcfc2"/>
<rect x="387.0" y="59.1" width="15.6" height="12.4" fill="#dbcfc2"/>
<rect x="399.4" y="73.1" width="15.6" height="14.0" fill="#dbcfc2"/>
<rect x="295.2" y="80.9" width="18.7" height="12.4" fill="#dbcfc2"/>
<rect x="352.8" y="9.3" width="9.3" height="15.6" fill="#dbcfc2"/>
<rect x="355.9" y="0.0" width="18.7" height="21.8" fill="#dbcfc2"/>
<rect x="315.4" y="87.1" width="10.9" height="10.0" fill="#dbcfc2"/>
<rect x="172.3" y="181.5" width="14.0" height="7.8" fill="#dbcfc2"/>
<rect x="203.4" y="155.1" width="9.3" height="7.8" fill="#dbcfc2"/>
<rect x="236.1" y="108.4" width="10.9" height="9.3" fill="#dbcfc2"/>
<rect x="242.3" y="147.3" width="10.9" height="7.8" fill="#dbcfc2"/>
<rect x="228.3" y="120.9" width="7.8" height="9.3" fill="#dbcfc2"/>
<rect x="240.8" y="156.7" width="31.1" height="9.3" fill="#dbcfc2"/>
<rect x="275.0" y="96.0" width="18.7" height="24.9" fill="#dbcfc2"/>
<rect x="298.3" y="103.8" width="20.2" height="15.6" fill="#dbcfc2"/>
<rect x="327.9" y="111.6" width="20.2" height="9.3" fill="#dbcfc2"/>
<rect x="368.3" y="105.3" width="15.6" height="18.7" fill="#dbcfc2"/>
<rect x="396.3" y="127.1" width="18.7" height="12.4" fill="#dbcfc2"/>
<rect x="365.2" y="161.3" width="18.7" height="28.0" fill="#dbcfc2"/>
<rect x="387.0" y="155.1" width="28.0" height="34.2" fill="#dbcfc2"/>
<rect x="275.0" y="136.4" width="14.0" height="20.2" fill="#dbcfc2"/>
<rect x="324.8" y="138.0" width="15.6" height="20.2" fill="#dbcfc2"/>
<rect x="68.4" y="162.9" width="7.8" height="4.7" fill="#dbcfc2"/>
<rect x="52.9" y="170.7" width="12.4" height="6.2" fill="#dbcfc2"/>
<rect x="37.3" y="176.9" width="12.4" height="12.4" fill="#dbcfc2"/>
<rect x="87.1" y="164.4" width="9.3" height="6.2" fill="#dbcfc2"/>
<rect x="3.1" y="156.7" width="6.2" height="7.8" fill="#dbcfc2"/>
<rect x="276.6" y="0.2" width="2.6" height="4.6" fill="#ddd3c8"/>
<rect x="282.9" y="0.1" width="5.6" height="2.9" fill="#ddd3c8"/>
<rect x="290.9" y="1.3" width="3.7" height="5.3" fill="#ddd3c8"/>
<rect x="298.0" y="0.1" width="2.2" height="4.3" fill="#ddd3c8"/>
<rect x="311.1" y="1.4" width="2.6" height="2.5" fill="#dbd0c4"/>
<rect x="318.1" y="0.1" width="4.3" height="2.8" fill="#ddd3c8"/>
<rect x="325.6" y="0.9" width="2.8" height="4.7" fill="#dbd0c4"/>
<rect x="338.2" y="0.6" width="3.0" height="2.7" fill="#ddd3c8"/>
<rect x="347.0" y="0.2" width="3.4" height="3.8" fill="#dfd6cc"/>
<rect x="352.8" y="1.9" width="5.0" height="2.6" fill="#dbd0c4"/>
<rect x="359.7" y="0.7" width="4.2" height="5.2" fill="#dbd0c4"/>
<rect x="367.9" y="0.9" width="5.2" height="2.3" fill="#ddd3c8"/>
<rect x="381.6" y="0.6" width="4.8" height="4.6" fill="#dfd6cc"/>
<rect x="387.7" y="1.2" width="4.7" height="2.1" fill="#dbd0c4"/>
<rect x="394.5" y="0.8" width="2.9" height="3.1" fill="#dfd6cc"/>
<rect x="409.6" y="1.7" width="3.8" height="4.2" fill="#ddd3c8"/>
<rect x="276.9" y="7.3" width="3.7" height="3.4" fill="#dbd0c4"/>
<rect x="283.7" y="7.4" width="2.9" height="2.9" fill="#dbd0c4"/>
<rect x="290.1" y="8.9" width="2.6" height="4.1" fill="#dfd6cc"/>
<rect x="303.9" y="8.7" width="4.5" height="4.7" fill="#ddd3c8"/>
<rect x="325.3" y="7.1" width="3.6" height="3.6" fill="#dbd0c4"/>
<rect x="332.2" y="7.2" width="2.8" height="2.6" fill="#dbd0c4"/>
<rect x="338.1" y="8.7" width="4.1" height="5.8" fill="#dfd6cc"/>
<rect x="346.2" y="7.9" width="2.6" height="3.0" fill="#dbd0c4"/>
<rect x="353.0" y="7.2" width="4.0" height="5.9" fill="#dbd0c4"/>
<rect x="359.3" y="7.0" width="3.4" height="3.1" fill="#dfd6cc"/>
<rect x="374.5" y="7.6" width="2.6" height="4.2" fill="#ddd3c8"/>
<rect x="387.7" y="7.4" width="5.4" height="4.1" fill="#ddd3c8"/>
<rect x="395.6" y="9.0" width="4.0" height="4.5" fill="#dfd6cc"/>
<rect x="291.0" y="15.6" width="4.1" height="3.4" fill="#ddd3c8"/>
<rect x="296.9" y="15.9" width="2.8" height="4.4" fill="#dbd0c4"/>
<rect x="317.7" y="15.0" width="2.9" height="2.9" fill="#ddd3c8"/>
<rect x="332.6" y="14.2" width="2.0" height="5.6" fill="#dbd0c4"/>
<rect x="366.2" y="15.9" width="2.7" height="5.2" fill="#dbd0c4"/>
<rect x="380.3" y="14.3" width="5.0" height="2.3" fill="#ddd3c8"/>
<rect x="388.2" y="15.2" width="5.6" height="5.2" fill="#ddd3c8"/>
<rect x="394.3" y="14.0" width="5.7" height="2.6" fill="#dfd6cc"/>
<rect x="276.7" y="21.4" width="5.7" height="3.7" fill="#ddd3c8"/>
<rect x="282.7" y="22.1" width="3.2" height="3.0" fill="#dfd6cc"/>
<rect x="297.2" y="22.8" width="5.0" height="5.6" fill="#dfd6cc"/>
<rect x="303.3" y="22.0" width="5.7" height="4.0" fill="#dfd6cc"/>
<rect x="324.9" y="22.5" width="5.1" height="2.6" fill="#ddd3c8"/>
<rect x="332.0" y="22.6" width="3.3" height="4.1" fill="#dfd6cc"/>
<rect x="346.0" y="22.1" width="2.8" height="2.2" fill="#ddd3c8"/>
<rect x="366.4" y="21.6" width="4.5" height="4.0" fill="#dfd6cc"/>
<rect x="374.4" y="22.8" width="5.2" height="4.0" fill="#ddd3c8"/>
<rect x="387.3" y="21.2" width="4.2" height="5.8" fill="#dbd0c4"/>
<rect x="394.4" y="21.6" width="2.3" height="3.0" fill="#ddd3c8"/>
<rect x="402.3" y="21.3" width="5.1" height="5.8" fill="#dfd6cc"/>
<rect x="282.3" y="29.3" width="5.8" height="3.6" fill="#dbd0c4"/>
<rect x="289.7" y="28.4" width="4.8" height="6.0" fill="#dbd0c4"/>
<rect x="296.9" y="29.4" width="4.9" height="2.1" fill="#dfd6cc"/>
<rect x="303.2" y="29.8" width="4.1" height="3.2" fill="#ddd3c8"/>
<rect x="310.1" y="29.6" width="5.5" height="2.3" fill="#dbd0c4"/>
<rect x="318.6" y="28.5" width="2.5" height="3.7" fill="#dfd6cc"/>
<rect x="324.7" y="28.6" width="5.7" height="4.3" fill="#dfd6cc"/>
<rect x="339.3" y="29.6" width="5.6" height="3.1" fill="#ddd3c8"/>
<rect x="345.9" y="28.7" width="5.4" height="2.3" fill="#ddd3c8"/>
<rect x="352.1" y="29.4" width="5.7" height="3.1" fill="#ddd3c8"/>
<rect x="373.6" y="29.5" width="2.7" height="5.7" fill="#dfd6cc"/>
<rect x="381.6" y="30.0" width="4.0" height="2.7" fill="#dbd0c4"/>
<rect x="388.0" y="28.5" width="2.1" height="4.0" fill="#ddd3c8"/>
<rect x="395.0" y="29.7" width="4.6" height="4.6" fill="#dfd6cc"/>
<rect x="401.7" y="29.7" width="4.0" height="4.8" fill="#ddd3c8"/>
<rect x="282.0" y="36.3" width="3.4" height="2.2" fill="#ddd3c8"/>
<rect x="297.7" y="36.3" width="2.2" height="4.7" fill="#dbd0c4"/>
<rect x="303.4" y="35.5" width="3.0" height="3.2" fill="#dbd0c4"/>
<rect x="310.6" y="35.1" width="3.5" height="3.3" fill="#dfd6cc"/>
<rect x="324.9" y="36.0" width="2.7" height="3.3" fill="#ddd3c8"/>
<rect x="332.6" y="35.3" width="4.0" height="2.0" fill="#dbd0c4"/>
<rect x="338.5" y="36.2" width="3.6" height="3.2" fill="#dfd6cc"/>
<rect x="346.6" y="36.2" width="5.0" height="4.6" fill="#dfd6cc"/>
<rect x="366.1" y="36.7" width="3.1" height="4.5" fill="#ddd3c8"/>
<rect x="402.7" y="36.2" width="4.1" height="4.0" fill="#ddd3c8"/>
<rect x="290.9" y="42.8" width="2.1" height="2.5" fill="#dbd0c4"/>
<rect x="297.4" y="43.0" width="2.2" height="2.1" fill="#dfd6cc"/>
<rect x="304.8" y="42.2" width="5.2" height="5.0" fill="#dfd6cc"/>
<rect x="311.7" y="42.5" width="5.0" height="3.9" fill="#ddd3c8"/>
<rect x="324.2" y="43.8" width="4.6" height="3.8" fill="#dbd0c4"/>
<rect x="331.2" y="42.3" width="2.2" height="4.5" fill="#ddd3c8"/>
<rect x="338.3" y="43.0" width="5.0" height="3.2" fill="#dfd6cc"/>
<rect x="346.4" y="42.6" width="5.9" height="2.4" fill="#ddd3c8"/>
<rect x="354.0" y="43.1" width="3.9" height="3.9" fill="#ddd3c8"/>
<rect x="359.9" y="43.6" width="2.3" height="3.9" fill="#dbd0c4"/>
<rect x="373.1" y="42.2" width="3.1" height="2.8" fill="#ddd3c8"/>
<rect x="388.0" y="43.8" width="3.4" height="4.4" fill="#dfd6cc"/>
<rect x="401.3" y="43.9" width="5.6" height="3.9" fill="#ddd3c8"/>
<rect x="275.6" y="50.7" width="4.9" height="3.7" fill="#dbd0c4"/>
<rect x="283.9" y="49.4" width="5.0" height="5.4" fill="#ddd3c8"/>
<rect x="289.8" y="51.0" width="5.0" height="3.0" fill="#ddd3c8"/>
<rect x="297.7" y="49.6" width="3.4" height="3.7" fill="#dbd0c4"/>
<rect x="303.5" y="49.5" width="4.6" height="4.5" fill="#ddd3c8"/>
<rect x="311.8" y="50.6" width="2.8" height="3.5" fill="#dbd0c4"/>
<rect x="338.8" y="50.2" width="4.9" height="2.2" fill="#dfd6cc"/>
<rect x="345.3" y="49.9" width="5.5" height="3.9" fill="#dfd6cc"/>
<rect x="352.5" y="50.3" width="3.2" height="5.0" fill="#dfd6cc"/>
<rect x="360.3" y="49.2" width="4.2" height="3.6" fill="#ddd3c8"/>
<rect x="367.8" y="51.0" width="5.2" height="4.2" fill="#dbd0c4"/>
<rect x="373.3" y="50.1" width="2.6" height="2.8" fill="#ddd3c8"/>
<rect x="381.8" y="50.5" width="3.5" height="5.2" fill="#ddd3c8"/>
<rect x="387.5" y="50.5" width="3.7" height="4.1" fill="#dbd0c4"/>
<rect x="395.0" y="50.3" width="4.3" height="3.4" fill="#dfd6cc"/>
<rect x="409.3" y="49.9" width="3.1" height="3.0" fill="#dbd0c4"/>
<rect x="275.1" y="57.4" width="5.3" height="5.9" fill="#ddd3c8"/>
<rect x="290.9" y="57.9" width="4.3" height="2.0" fill="#dbd0c4"/>
<rect x="296.4" y="56.3" width="3.9" height="3.8" fill="#ddd3c8"/>
<rect x="310.2" y="57.6" width="5.3" height="4.8" fill="#dbd0c4"/>
<rect x="318.3" y="56.6" width="2.5" height="4.3" fill="#ddd3c8"/>
<rect x="325.5" y="56.2" width="3.0" height="4.5" fill="#dfd6cc"/>
<rect x="331.4" y="57.2" width="5.8" height="2.8" fill="#dbd0c4"/>
<rect x="339.3" y="57.8" width="3.2" height="3.8" fill="#dbd0c4"/>
<rect x="346.4" y="56.6" width="2.9" height="3.0" fill="#dbd0c4"/>
<rect x="352.2" y="56.5" width="4.0" height="4.7" fill="#dbd0c4"/>
<rect x="359.7" y="56.8" width="3.5" height="4.0" fill="#dfd6cc"/>
<rect x="373.1" y="57.0" width="5.2" height="5.0" fill="#dfd6cc"/>
<rect x="380.4" y="57.5" width="5.1" height="2.8" fill="#dbd0c4"/>
<rect x="388.8" y="57.0" width="5.8" height="4.0" fill="#ddd3c8"/>
<rect x="401.4" y="57.9" width="4.4" height="5.7" fill="#ddd3c8"/>
<rect x="408.9" y="57.4" width="2.2" height="2.2" fill="#dbd0c4"/>
<rect x="275.7" y="63.4" width="2.5" height="2.3" fill="#ddd3c8"/>
<rect x="298.0" y="63.9" width="4.7" height="3.5" fill="#dbd0c4"/>
<rect x="304.9" y="63.2" width="2.3" height="2.3" fill="#dbd0c4"/>
<rect x="317.2" y="64.4" width="3.4" height="5.3" fill="#dbd0c4"/>
<rect x="324.7" y="64.8" width="4.2" height="3.8" fill="#dbd0c4"/>
<rect x="331.1" y="63.1" width="3.6" height="5.2" fill="#dbd0c4"/>
<rect x="338.1" y="64.2" width="5.7" height="3.0" fill="#dfd6cc"/>
<rect x="345.5" y="64.4" width="3.3" height="5.8" fill="#ddd3c8"/>
<rect x="353.8" y="64.3" width="3.1" height="2.0" fill="#dfd6cc"/>
<rect x="367.9" y="63.8" width="2.9" height="3.9" fill="#dbd0c4"/>
<rect x="373.4" y="64.6" width="3.7" height="4.0" fill="#dbd0c4"/>
<rect x="402.6" y="64.2" width="3.3" height="3.3" fill="#dbd0c4"/>
<rect x="408.1" y="63.1" width="3.6" height="2.6" fill="#dbd0c4"/>
<rect x="277.0" y="70.5" width="3.3" height="5.9" fill="#ddd3c8"/>
<rect x="283.9" y="70.3" width="2.4" height="4.0" fill="#dfd6cc"/>
<rect x="290.5" y="71.7" width="3.8" height="5.6" fill="#ddd3c8"/>
<rect x="303.5" y="70.5" width="5.4" height="3.2" fill="#dfd6cc"/>
<rect x="310.3" y="71.8" width="3.8" height="2.7" fill="#ddd3c8"/>
<rect x="318.0" y="70.5" width="3.3" height="3.6" fill="#ddd3c8"/>
<rect x="346.8" y="70.1" width="3.9" height="5.3" fill="#dbd0c4"/>
<rect x="352.4" y="70.2" width="2.5" height="2.8" fill="#dfd6cc"/>
<rect x="360.9" y="70.2" width="2.7" height="4.4" fill="#dfd6cc"/>
<rect x="366.7" y="70.1" width="4.5" height="2.9" fill="#dbd0c4"/>
<rect x="381.6" y="70.8" width="4.9" height="5.7" fill="#ddd3c8"/>
<rect x="388.6" y="71.1" width="4.5" height="2.3" fill="#ddd3c8"/>
<rect x="394.3" y="71.1" width="2.4" height="3.6" fill="#dfd6cc"/>
<rect x="408.6" y="71.9" width="3.1" height="6.0" fill="#dfd6cc"/>
<rect x="275.0" y="78.5" width="4.3" height="3.4" fill="#dbd0c4"/>
<rect x="297.8" y="77.8" width="3.6" height="5.8" fill="#dbd0c4"/>
<rect x="310.3" y="77.1" width="5.5" height="3.8" fill="#ddd3c8"/>
<rect x="318.2" y="77.7" width="5.2" height="3.6" fill="#dfd6cc"/>
<rect x="324.3" y="77.1" width="2.6" height="3.1" fill="#dfd6cc"/>
<rect x="331.6" y="78.7" width="5.0" height="5.2" fill="#ddd3c8"/>
<rect x="339.9" y="77.8" width="5.7" height="3.3" fill="#dfd6cc"/>
<rect x="367.2" y="77.4" width="5.1" height="2.9" fill="#dbd0c4"/>
<rect x="373.3" y="77.7" width="4.3" height="2.2" fill="#dfd6cc"/>
<rect x="380.1" y="78.1" width="5.9" height="5.3" fill="#ddd3c8"/>
<rect x="394.9" y="78.7" width="5.4" height="2.5" fill="#dfd6cc"/>
<rect x="275.9" y="84.9" width="3.0" height="3.6" fill="#dbd0c4"/>
<rect x="282.9" y="85.2" width="4.5" height="4.0" fill="#ddd3c8"/>
<rect x="310.2" y="84.9" width="2.3" height="3.4" fill="#dbd0c4"/>
<rect x="318.8" y="84.6" width="2.2" height="4.5" fill="#ddd3c8"/>
<rect x="332.9" y="84.3" width="5.0" height="5.6" fill="#dfd6cc"/>
<rect x="367.4" y="85.4" width="5.9" height="4.0" fill="#ddd3c8"/>
<rect x="373.3" y="85.8" width="5.3" height="4.4" fill="#dbd0c4"/>
<rect x="381.9" y="85.0" width="5.3" height="2.6" fill="#dfd6cc"/>
<rect x="387.1" y="84.4" width="4.5" height="2.9" fill="#dbd0c4"/>
<rect x="394.3" y="85.6" width="5.7" height="4.7" fill="#dbd0c4"/>
<rect x="402.9" y="84.9" width="4.1" height="4.5" fill="#dbd0c4"/>
<rect x="410.0" y="85.3" width="4.8" height="5.6" fill="#dbd0c4"/>
<rect x="276.2" y="91.7" width="5.2" height="3.1" fill="#dbd0c4"/>
<rect x="289.6" y="92.0" width="2.7" height="5.0" fill="#ddd3c8"/>
<rect x="297.8" y="92.5" width="5.9" height="5.5" fill="#dfd6cc"/>
<rect x="311.0" y="92.8" width="3.2" height="4.5" fill="#dbd0c4"/>
<rect x="317.1" y="92.1" width="2.9" height="4.6" fill="#ddd3c8"/>
<rect x="325.2" y="92.2" width="4.1" height="4.1" fill="#dbd0c4"/>
<rect x="331.0" y="92.6" width="4.5" height="3.9" fill="#ddd3c8"/>
<rect x="346.6" y="91.8" width="2.3" height="2.6" fill="#dfd6cc"/>
<rect x="353.8" y="92.2" width="2.0" height="4.6" fill="#dfd6cc"/>
<rect x="359.5" y="92.8" width="4.4" height="4.1" fill="#dbd0c4"/>
<rect x="366.3" y="92.8" width="4.1" height="3.6" fill="#ddd3c8"/>
<rect x="373.3" y="91.4" width="4.5" height="4.6" fill="#ddd3c8"/>
<rect x="380.3" y="91.6" width="4.0" height="4.6" fill="#dfd6cc"/>
<rect x="388.4" y="91.0" width="2.2" height="5.6" fill="#dbd0c4"/>
<rect x="410.0" y="91.5" width="5.0" height="3.8" fill="#ddd3c8"/>
<rect x="283.4" y="96.5" width="5.6" height="5.7" fill="#dbd0c4"/>
<rect x="290.9" y="96.6" width="3.7" height="5.2" fill="#dfd6cc"/>
<rect x="311.7" y="96.4" width="4.0" height="2.7" fill="#ddd3c8"/>
<rect x="317.7" y="96.5" width="5.7" height="2.8" fill="#dbd0c4"/>
<rect x="359.9" y="97.4" width="5.4" height="4.8" fill="#ddd3c8"/>
<rect x="367.2" y="97.1" width="3.2" height="2.8" fill="#dfd6cc"/>
<rect x="374.9" y="96.7" width="2.1" height="2.4" fill="#dfd6cc"/>
<rect x="381.3" y="96.1" width="2.1" height="2.2" fill="#dfd6cc"/>
<rect x="387.4" y="97.9" width="2.2" height="5.4" fill="#dbd0c4"/>
<rect x="395.9" y="96.2" width="4.7" height="5.5" fill="#dfd6cc"/>
<rect x="401.2" y="97.5" width="2.4" height="2.1" fill="#dfd6cc"/>
<rect x="275.4" y="103.6" width="2.5" height="5.2" fill="#dfd6cc"/>
<rect x="282.1" y="104.5" width="2.1" height="3.0" fill="#dbd0c4"/>
<rect x="303.1" y="103.8" width="3.9" height="3.2" fill="#dfd6cc"/>
<rect x="310.1" y="104.1" width="5.1" height="3.4" fill="#dfd6cc"/>
<rect x="331.4" y="104.5" width="3.1" height="3.7" fill="#dfd6cc"/>
<rect x="346.9" y="104.2" width="4.0" height="4.0" fill="#ddd3c8"/>
<rect x="360.9" y="103.5" width="4.3" height="2.6" fill="#ddd3c8"/>
<rect x="367.6" y="104.4" width="5.8" height="5.1" fill="#dbd0c4"/>
<rect x="387.2" y="104.8" width="3.6" height="3.6" fill="#dfd6cc"/>
<rect x="395.0" y="103.8" width="2.8" height="3.1" fill="#dfd6cc"/>
<rect x="409.5" y="104.3" width="3.8" height="4.1" fill="#dfd6cc"/>
<rect x="276.3" y="111.5" width="3.3" height="2.6" fill="#dbd0c4"/>
<rect x="282.5" y="110.7" width="3.8" height="5.1" fill="#dfd6cc"/>
<rect x="303.3" y="110.3" width="3.1" height="5.0" fill="#dfd6cc"/>
<rect x="310.5" y="111.9" width="3.3" height="4.1" fill="#ddd3c8"/>
<rect x="318.9" y="110.2" width="5.8" height="6.0" fill="#ddd3c8"/>
<rect x="324.6" y="110.5" width="5.9" height="5.2" fill="#dfd6cc"/>
<rect x="331.9" y="110.0" width="5.6" height="3.1" fill="#dbd0c4"/>
<rect x="345.9" y="110.3" width="2.9" height="5.9" fill="#dbd0c4"/>
<rect x="353.4" y="111.2" width="3.6" height="5.0" fill="#dbd0c4"/>
<rect x="401.9" y="110.6" width="2.9" height="2.7" fill="#ddd3c8"/>
<rect x="276.4" y="117.3" width="3.7" height="5.1" fill="#dfd6cc"/>
<rect x="290.4" y="118.9" width="2.1" height="5.4" fill="#dfd6cc"/>
<rect x="297.7" y="118.8" width="4.6" height="5.1" fill="#dbd0c4"/>
<rect x="304.6" y="118.9" width="3.0" height="2.9" fill="#dfd6cc"/>
<rect x="310.4" y="118.0" width="2.4" height="4.3" fill="#dfd6cc"/>
<rect x="317.8" y="118.9" width="5.2" height="3.5" fill="#dbd0c4"/>
<rect x="325.5" y="118.2" width="4.7" height="3.6" fill="#ddd3c8"/>
<rect x="338.8" y="117.8" width="3.5" height="2.2" fill="#ddd3c8"/>
<rect x="352.8" y="118.9" width="3.1" height="2.9" fill="#dfd6cc"/>
<rect x="381.6" y="118.3" width="2.7" height="5.7" fill="#ddd3c8"/>
<rect x="387.7" y="118.3" width="4.2" height="2.9" fill="#ddd3c8"/>
<rect x="409.6" y="117.9" width="3.2" height="4.2" fill="#ddd3c8"/>
<rect x="283.4" y="125.0" width="4.8" height="4.7" fill="#dbd0c4"/>
<rect x="303.9" y="125.3" width="4.6" height="3.3" fill="#dbd0c4"/>
<rect x="317.2" y="125.1" width="5.7" height="5.4" fill="#ddd3c8"/>
<rect x="325.3" y="124.0" width="5.8" height="4.1" fill="#dbd0c4"/>
<rect x="332.2" y="125.2" width="5.8" height="4.6" fill="#dbd0c4"/>
<rect x="346.8" y="125.6" width="3.8" height="5.1" fill="#ddd3c8"/>
<rect x="353.3" y="125.8" width="5.6" height="4.4" fill="#ddd3c8"/>
<rect x="374.7" y="125.3" width="4.8" height="4.1" fill="#dfd6cc"/>
<rect x="380.9" y="125.1" width="2.5" height="3.7" fill="#ddd3c8"/>
<rect x="388.0" y="125.1" width="5.6" height="4.8" fill="#ddd3c8"/>
<rect x="402.0" y="124.6" width="5.4" height="3.9" fill="#dfd6cc"/>
<rect x="408.2" y="125.3" width="3.7" height="6.0" fill="#dfd6cc"/>
<rect x="283.6" y="131.2" width="4.4" height="4.7" fill="#dbd0c4"/>
<rect x="290.4" y="132.3" width="5.0" height="2.6" fill="#ddd3c8"/>
<rect x="297.6" y="132.1" width="5.4" height="3.5" fill="#dbd0c4"/>
<rect x="311.7" y="131.6" width="3.4" height="3.0" fill="#ddd3c8"/>
<rect x="324.7" y="131.4" width="4.0" height="3.1" fill="#dfd6cc"/>
<rect x="331.6" y="132.2" width="2.5" height="2.8" fill="#dfd6cc"/>
<rect x="353.1" y="131.8" width="4.9" height="5.5" fill="#dfd6cc"/>
<rect x="360.2" y="132.3" width="2.2" height="5.3" fill="#dbd0c4"/>
<rect x="381.4" y="132.8" width="4.5" height="4.5" fill="#dfd6cc"/>
<rect x="388.5" y="131.2" width="2.2" height="4.5" fill="#dfd6cc"/>
<rect x="394.0" y="132.7" width="2.1" height="5.1" fill="#dfd6cc"/>
<rect x="401.4" y="131.1" width="3.2" height="4.8" fill="#dbd0c4"/>
<rect x="409.0" y="132.0" width="4.3" height="4.3" fill="#ddd3c8"/>
<rect x="289.0" y="138.8" width="4.8" height="3.6" fill="#ddd3c8"/>
<rect x="297.5" y="139.1" width="5.8" height="5.9" fill="#dbd0c4"/>
<rect x="303.0" y="138.0" width="3.9" height="5.6" fill="#dfd6cc"/>
<rect x="317.3" y="138.0" width="5.9" height="2.4" fill="#ddd3c8"/>
<rect x="331.7" y="139.5" width="4.9" height="2.7" fill="#ddd3c8"/>
<rect x="346.4" y="138.9" width="5.0" height="3.2" fill="#dfd6cc"/>
<rect x="359.1" y="139.8" width="5.9" height="4.9" fill="#ddd3c8"/>
<rect x="373.3" y="139.7" width="3.6" height="3.2" fill="#dfd6cc"/>
<rect x="381.5" y="138.9" width="2.2" height="3.5" fill="#dfd6cc"/>
<rect x="387.3" y="139.6" width="5.9" height="2.5" fill="#dfd6cc"/>
<rect x="395.6" y="139.1" width="5.1" height="3.8" fill="#dbd0c4"/>
<rect x="402.6" y="139.2" width="2.2" height="5.9" fill="#dfd6cc"/>
<rect x="282.9" y="146.8" width="2.6" height="5.3" fill="#dfd6cc"/>
<rect x="290.6" y="145.6" width="4.7" height="4.4" fill="#ddd3c8"/>
<rect x="297.8" y="146.5" width="3.1" height="3.7" fill="#dfd6cc"/>
<rect x="310.3" y="147.0" width="2.6" height="5.6" fill="#dfd6cc"/>
<rect x="324.2" y="146.1" width="5.1" height="4.0" fill="#dfd6cc"/>
<rect x="338.6" y="145.1" width="5.0" height="5.7" fill="#ddd3c8"/>
<rect x="346.5" y="146.6" width="4.8" height="5.7" fill="#dfd6cc"/>
<rect x="352.5" y="146.2" width="2.4" height="5.2" fill="#ddd3c8"/>
<rect x="373.4" y="145.2" width="3.9" height="4.4" fill="#ddd3c8"/>
<rect x="388.7" y="145.5" width="4.3" height="3.4" fill="#dfd6cc"/>
<rect x="402.6" y="145.3" width="5.5" height="3.5" fill="#dbd0c4"/>
<rect x="408.2" y="145.4" width="3.4" height="4.1" fill="#ddd3c8"/>
<rect x="282.9" y="153.9" width="4.3" height="2.9" fill="#dbd0c4"/>
<rect x="310.8" y="152.1" width="2.2" height="2.8" fill="#ddd3c8"/>
<rect x="318.9" y="153.8" width="3.5" height="4.8" fill="#dbd0c4"/>
<rect x="325.4" y="152.2" width="4.4" height="3.6" fill="#ddd3c8"/>
<rect x="332.0" y="152.4" width="2.9" height="2.4" fill="#dfd6cc"/>
<rect x="345.1" y="152.5" width="2.9" height="4.9" fill="#ddd3c8"/>
<rect x="352.5" y="153.0" width="5.6" height="5.6" fill="#ddd3c8"/>
<rect x="374.9" y="153.4" width="2.4" height="3.3" fill="#ddd3c8"/>
<rect x="380.9" y="152.7" width="4.4" height="5.0" fill="#ddd3c8"/>
<rect x="387.5" y="152.3" width="3.5" height="3.5" fill="#dbd0c4"/>
<rect x="401.3" y="153.7" width="4.9" height="2.8" fill="#ddd3c8"/>
<rect x="408.3" y="152.9" width="4.5" height="3.5" fill="#dfd6cc"/>
<rect x="275.2" y="160.9" width="5.7" height="5.4" fill="#dfd6cc"/>
<rect x="282.3" y="159.4" width="2.9" height="2.5" fill="#dbd0c4"/>
<rect x="289.9" y="159.3" width="4.9" height="4.2" fill="#ddd3c8"/>
<rect x="297.7" y="159.7" width="3.0" height="2.1" fill="#dfd6cc"/>
<rect x="303.2" y="161.0" width="4.0" height="3.3" fill="#dbd0c4"/>
<rect x="311.1" y="160.7" width="5.6" height="4.7" fill="#ddd3c8"/>
<rect x="319.0" y="161.0" width="5.0" height="5.9" fill="#dbd0c4"/>
<rect x="332.7" y="161.0" width="3.2" height="5.6" fill="#ddd3c8"/>
<rect x="338.7" y="159.3" width="4.6" height="3.8" fill="#dfd6cc"/>
<rect x="345.7" y="159.1" width="5.3" height="4.1" fill="#ddd3c8"/>
<rect x="353.0" y="159.5" width="3.1" height="2.7" fill="#ddd3c8"/>
<rect x="360.5" y="160.5" width="4.4" height="5.3" fill="#dfd6cc"/>
<rect x="367.6" y="160.2" width="2.5" height="4.7" fill="#dfd6cc"/>
<rect x="374.7" y="160.8" width="2.3" height="4.9" fill="#dbd0c4"/>
<rect x="381.7" y="160.0" width="3.4" height="3.1" fill="#dfd6cc"/>
<rect x="387.5" y="159.4" width="5.6" height="3.9" fill="#dfd6cc"/>
<rect x="402.7" y="159.7" width="2.7" height="3.5" fill="#dfd6cc"/>
<rect x="283.6" y="167.7" width="3.4" height="3.0" fill="#dbd0c4"/>
<rect x="290.9" y="167.0" width="5.6" height="3.2" fill="#ddd3c8"/>
<rect x="296.5" y="166.2" width="4.1" height="4.1" fill="#ddd3c8"/>
<rect x="304.6" y="166.1" width="2.7" height="3.2" fill="#dfd6cc"/>
<rect x="311.7" y="167.3" width="4.8" height="2.8" fill="#ddd3c8"/>
<rect x="318.7" y="167.4" width="3.0" height="3.8" fill="#dbd0c4"/>
<rect x="325.5" y="166.2" width="2.5" height="4.0" fill="#dfd6cc"/>
<rect x="332.7" y="166.3" width="5.5" height="4.2" fill="#ddd3c8"/>
<rect x="339.9" y="166.8" width="5.0" height="2.7" fill="#ddd3c8"/>
<rect x="346.9" y="166.1" width="5.4" height="4.1" fill="#dbd0c4"/>
<rect x="352.9" y="168.0" width="3.6" height="5.4" fill="#dfd6cc"/>
<rect x="387.5" y="166.8" width="4.1" height="5.8" fill="#dbd0c4"/>
<rect x="401.4" y="167.3" width="4.1" height="2.3" fill="#dbd0c4"/>
<rect x="409.3" y="167.6" width="3.7" height="3.6" fill="#dbd0c4"/>
<rect x="290.2" y="174.3" width="4.6" height="3.1" fill="#dfd6cc"/>
<rect x="303.9" y="174.9" width="2.4" height="2.5" fill="#ddd3c8"/>
<rect x="310.1" y="174.9" width="3.2" height="4.6" fill="#ddd3c8"/>
<rect x="331.2" y="173.3" width="4.4" height="5.7" fill="#dbd0c4"/>
<rect x="339.5" y="174.5" width="3.6" height="3.2" fill="#ddd3c8"/>
<rect x="346.3" y="173.4" width="3.8" height="4.8" fill="#ddd3c8"/>
<rect x="360.6" y="173.1" width="4.2" height="4.5" fill="#dbd0c4"/>
<rect x="366.8" y="174.8" width="2.8" height="4.2" fill="#dfd6cc"/>
<rect x="374.0" y="173.6" width="5.8" height="3.3" fill="#dbd0c4"/>
<rect x="388.2" y="173.7" width="5.1" height="2.6" fill="#ddd3c8"/>
<rect x="402.0" y="175.0" width="5.3" height="3.4" fill="#ddd3c8"/>
<rect x="283.2" y="181.7" width="4.7" height="2.6" fill="#ddd3c8"/>
<rect x="296.5" y="181.3" width="5.0" height="5.0" fill="#dbd0c4"/>
<rect x="318.2" y="181.0" width="2.4" height="3.6" fill="#dfd6cc"/>
<rect x="332.2" y="180.8" width="3.7" height="5.1" fill="#dfd6cc"/>
<rect x="338.7" y="181.1" width="3.8" height="4.9" fill="#dbd0c4"/>
<rect x="346.7" y="181.0" width="4.6" height="2.0" fill="#dfd6cc"/>
<rect x="352.9" y="180.8" width="2.7" height="3.2" fill="#ddd3c8"/>
<rect x="360.7" y="181.9" width="5.3" height="3.3" fill="#dfd6cc"/>
<rect x="366.1" y="180.5" width="3.7" height="5.6" fill="#ddd3c8"/>
<rect x="382.0" y="181.0" width="4.1" height="3.2" fill="#dfd6cc"/>
<rect x="387.1" y="181.4" width="4.7" height="3.6" fill="#dbd0c4"/>
<rect x="394.2" y="180.7" width="2.0" height="2.3" fill="#ddd3c8"/>
<rect x="402.9" y="181.0" width="4.2" height="4.3" fill="#ddd3c8"/>
<rect x="409.4" y="181.5" width="4.5" height="6.0" fill="#dbd0c4"/>
<rect x="276.7" y="188.0" width="3.5" height="3.5" fill="#ddd3c8"/>
<rect x="283.8" y="187.8" width="5.6" height="4.8" fill="#dfd6cc"/>
<rect x="290.8" y="187.8" width="3.2" height="4.0" fill="#dfd6cc"/>
<rect x="298.0" y="188.3" width="4.3" height="2.4" fill="#dfd6cc"/>
<rect x="304.4" y="188.1" width="3.6" height="5.2" fill="#dbd0c4"/>
<rect x="317.4" y="188.0" width="2.4" height="2.1" fill="#ddd3c8"/>
<rect x="325.0" y="187.3" width="3.1" height="4.6" fill="#dfd6cc"/>
<rect x="332.5" y="187.2" width="4.4" height="2.6" fill="#dfd6cc"/>
<rect x="339.2" y="188.6" width="2.7" height="4.1" fill="#dbd0c4"/>
<rect x="345.3" y="187.5" width="2.0" height="5.1" fill="#dbd0c4"/>
<rect x="352.1" y="187.4" width="2.1" height="4.5" fill="#dfd6cc"/>
<rect x="366.9" y="188.2" width="2.9" height="3.6" fill="#ddd3c8"/>
<rect x="373.6" y="188.8" width="2.2" height="5.7" fill="#ddd3c8"/>
<rect x="389.0" y="187.1" width="4.4" height="5.8" fill="#dbd0c4"/>
<rect x="409.0" y="188.6" width="3.7" height="3.6" fill="#dfd6cc"/>
<rect x="244.0" y="63.8" width="2.7" height="3.4" fill="#ddd3c8"/>
<rect x="251.7" y="63.3" width="3.5" height="3.3" fill="#dbd0c4"/>
<rect x="265.4" y="62.6" width="5.7" height="4.2" fill="#dbd0c4"/>
<rect x="273.6" y="62.5" width="2.1" height="4.7" fill="#dbd0c4"/>
<rect x="245.1" y="69.9" width="2.8" height="4.2" fill="#ddd3c8"/>
<rect x="258.8" y="70.9" width="3.5" height="2.9" fill="#dbd0c4"/>
<rect x="266.7" y="70.4" width="5.8" height="4.0" fill="#ddd3c8"/>
<rect x="251.5" y="77.2" width="3.8" height="6.0" fill="#dfd6cc"/>
<rect x="258.2" y="77.7" width="5.5" height="2.5" fill="#dfd6cc"/>
<rect x="244.8" y="83.2" width="4.9" height="2.6" fill="#ddd3c8"/>
<rect x="252.8" y="83.1" width="5.4" height="3.3" fill="#dfd6cc"/>
<rect x="244.3" y="91.4" width="4.9" height="2.4" fill="#dbd0c4"/>
<rect x="252.8" y="91.7" width="3.6" height="5.6" fill="#dfd6cc"/>
<rect x="259.6" y="91.4" width="3.1" height="2.1" fill="#dfd6cc"/>
<rect x="272.7" y="91.3" width="4.8" height="3.9" fill="#dbd0c4"/>
<rect x="252.4" y="16.4" width="2.5" height="5.7" fill="#dfd6cc"/>
<rect x="259.3" y="16.5" width="4.4" height="3.7" fill="#dbd0c4"/>
<rect x="267.7" y="16.1" width="4.5" height="5.8" fill="#dfd6cc"/>
<rect x="253.9" y="22.2" width="3.7" height="4.7" fill="#dbd0c4"/>
<rect x="259.2" y="30.6" width="4.8" height="5.9" fill="#dfd6cc"/>
<rect x="266.8" y="30.5" width="5.7" height="5.0" fill="#ddd3c8"/>
<rect x="253.9" y="36.8" width="2.9" height="4.1" fill="#dbd0c4"/>
<rect x="267.3" y="44.7" width="2.2" height="4.8" fill="#dbd0c4"/>
<rect x="252.5" y="51.1" width="2.8" height="5.8" fill="#dfd6cc"/>
<rect x="273.7" y="50.2" width="3.0" height="2.2" fill="#dbd0c4"/>
<rect x="259.5" y="57.5" width="4.7" height="3.9" fill="#dbd0c4"/>
<rect x="267.4" y="57.3" width="3.8" height="5.7" fill="#dbd0c4"/>
<rect x="201.1" y="148.5" width="3.0" height="4.5" fill="#ddd3c8"/>
<rect x="208.7" y="147.8" width="4.7" height="4.4" fill="#dbd0c4"/>
<rect x="214.4" y="147.1" width="4.8" height="2.0" fill="#dbd0c4"/>
<rect x="222.9" y="147.3" width="2.8" height="4.8" fill="#dbd0c4"/>
<rect x="228.1" y="147.0" width="4.3" height="3.2" fill="#dfd6cc"/>
<rect x="249.5" y="148.3" width="4.9" height="5.9" fill="#dfd6cc"/>
<rect x="264.8" y="148.3" width="5.1" height="3.3" fill="#dbd0c4"/>
<rect x="214.1" y="154.8" width="3.0" height="2.6" fill="#ddd3c8"/>
<rect x="222.7" y="155.9" width="3.5" height="5.8" fill="#dfd6cc"/>
<rect x="229.2" y="154.8" width="5.1" height="5.3" fill="#dfd6cc"/>
<rect x="243.7" y="154.5" width="2.9" height="2.5" fill="#dbd0c4"/>
<rect x="249.8" y="154.1" width="2.4" height="5.2" fill="#dfd6cc"/>
<rect x="257.2" y="155.3" width="3.7" height="4.9" fill="#dbd0c4"/>
<rect x="264.9" y="154.2" width="2.9" height="2.6" fill="#dfd6cc"/>
<rect x="270.7" y="154.1" width="3.8" height="2.8" fill="#dfd6cc"/>
<rect x="200.6" y="162.3" width="5.3" height="4.0" fill="#ddd3c8"/>
<rect x="207.0" y="162.9" width="3.7" height="3.4" fill="#dbd0c4"/>
<rect x="214.9" y="162.1" width="4.9" height="3.5" fill="#ddd3c8"/>
<rect x="222.0" y="161.9" width="2.8" height="2.3" fill="#dbd0c4"/>
<rect x="229.9" y="162.2" width="4.5" height="2.6" fill="#dbd0c4"/>
<rect x="243.1" y="161.8" width="4.7" height="4.4" fill="#dbd0c4"/>
<rect x="250.1" y="162.3" width="4.6" height="2.5" fill="#dbd0c4"/>
<rect x="264.3" y="161.7" width="5.0" height="4.8" fill="#ddd3c8"/>
<rect x="270.9" y="161.5" width="3.7" height="4.1" fill="#dfd6cc"/>
<rect x="200.2" y="169.7" width="5.9" height="2.8" fill="#dfd6cc"/>
<rect x="208.4" y="168.5" width="2.4" height="4.1" fill="#dbd0c4"/>
<rect x="215.0" y="169.2" width="4.2" height="4.8" fill="#dfd6cc"/>
<rect x="221.3" y="169.0" width="3.6" height="2.3" fill="#dbd0c4"/>
<rect x="230.0" y="169.4" width="5.4" height="5.8" fill="#dfd6cc"/>
<rect x="236.9" y="168.4" width="5.3" height="3.6" fill="#ddd3c8"/>
<rect x="242.1" y="168.5" width="2.4" height="3.5" fill="#dfd6cc"/>
<rect x="249.9" y="168.2" width="2.1" height="4.4" fill="#ddd3c8"/>
<rect x="257.1" y="169.8" width="5.6" height="2.4" fill="#ddd3c8"/>
<rect x="271.4" y="169.7" width="5.0" height="3.4" fill="#dfd6cc"/>
<rect x="201.4" y="175.1" width="3.5" height="4.9" fill="#dbd0c4"/>
<rect x="207.2" y="176.9" width="2.4" height="4.2" fill="#dfd6cc"/>
<rect x="221.9" y="176.6" width="2.8" height="3.8" fill="#dfd6cc"/>
<rect x="229.1" y="175.6" width="2.3" height="3.0" fill="#ddd3c8"/>
<rect x="244.0" y="176.5" width="2.6" height="5.5" fill="#dfd6cc"/>
<rect x="250.0" y="176.0" width="3.8" height="2.1" fill="#ddd3c8"/>
<rect x="257.6" y="176.4" width="5.3" height="2.3" fill="#dfd6cc"/>
<rect x="263.8" y="176.7" width="3.9" height="2.6" fill="#dbd0c4"/>
<rect x="270.6" y="175.3" width="2.3" height="3.3" fill="#ddd3c8"/>
<rect x="208.2" y="182.8" width="5.3" height="4.9" fill="#dbd0c4"/>
<rect x="214.5" y="182.5" width="2.0" height="4.3" fill="#dbd0c4"/>
<rect x="228.5" y="182.5" width="4.5" height="4.9" fill="#ddd3c8"/>
<rect x="236.2" y="182.3" width="3.0" height="4.3" fill="#dfd6cc"/>
<rect x="264.3" y="182.7" width="2.8" height="3.7" fill="#dfd6cc"/>
<rect x="271.4" y="182.6" width="5.2" height="5.5" fill="#ddd3c8"/>
<rect x="215.4" y="189.7" width="4.5" height="3.4" fill="#dfd6cc"/>
<rect x="249.3" y="189.4" width="5.6" height="5.2" fill="#dbd0c4"/>
<rect x="271.2" y="189.3" width="3.6" height="5.1" fill="#ddd3c8"/>
<rect x="229.1" y="96.4" width="4.3" height="4.6" fill="#dbd0c4"/>
<rect x="243.7" y="97.5" width="3.2" height="3.4" fill="#dbd0c4"/>
<rect x="250.6" y="96.4" width="5.5" height="2.3" fill="#dbd0c4"/>
<rect x="265.4" y="96.4" width="5.0" height="4.5" fill="#ddd3c8"/>
<rect x="272.3" y="96.4" width="2.8" height="4.4" fill="#dfd6cc"/>
<rect x="236.7" y="103.3" width="2.3" height="5.2" fill="#dfd6cc"/>
<rect x="243.6" y="103.1" width="4.1" height="5.5" fill="#dfd6cc"/>
<rect x="250.8" y="104.4" width="5.5" height="2.1" fill="#dbd0c4"/>
<rect x="257.2" y="104.2" width="2.2" height="3.7" fill="#ddd3c8"/>
<rect x="223.9" y="111.1" width="5.8" height="5.5" fill="#ddd3c8"/>
<rect x="236.3" y="110.0" width="4.5" height="4.9" fill="#dbd0c4"/>
<rect x="244.6" y="110.8" width="4.1" height="5.4" fill="#dbd0c4"/>
<rect x="252.0" y="111.1" width="4.4" height="4.2" fill="#dfd6cc"/>
<rect x="258.5" y="111.6" width="4.5" height="5.3" fill="#dbd0c4"/>
<rect x="265.1" y="110.7" width="5.1" height="5.9" fill="#dbd0c4"/>
<rect x="272.0" y="111.3" width="3.1" height="3.0" fill="#dfd6cc"/>
<rect x="230.9" y="118.2" width="6.0" height="2.9" fill="#ddd3c8"/>
<rect x="236.5" y="118.2" width="4.2" height="2.8" fill="#ddd3c8"/>
<rect x="224.0" y="125.0" width="3.4" height="4.8" fill="#dbd0c4"/>
<rect x="237.6" y="124.1" width="5.2" height="3.8" fill="#dbd0c4"/>
<rect x="251.7" y="124.1" width="5.2" height="5.7" fill="#dfd6cc"/>
<rect x="258.3" y="124.4" width="3.6" height="5.7" fill="#dfd6cc"/>
<rect x="264.7" y="124.7" width="3.0" height="3.7" fill="#ddd3c8"/>
<rect x="271.4" y="125.1" width="3.1" height="5.5" fill="#dbd0c4"/>
<rect x="223.9" y="131.3" width="5.5" height="5.5" fill="#dbd0c4"/>
<rect x="229.3" y="132.4" width="2.4" height="2.0" fill="#ddd3c8"/>
<rect x="237.7" y="132.5" width="3.8" height="4.3" fill="#ddd3c8"/>
<rect x="244.7" y="133.0" width="5.1" height="3.8" fill="#dbd0c4"/>
<rect x="250.3" y="131.6" width="2.1" height="2.4" fill="#ddd3c8"/>
<rect x="258.4" y="131.2" width="3.4" height="5.0" fill="#dbd0c4"/>
<rect x="266.0" y="131.1" width="5.7" height="4.9" fill="#dbd0c4"/>
<rect x="271.3" y="132.2" width="5.2" height="4.8" fill="#ddd3c8"/>
<rect x="224.0" y="138.6" width="4.8" height="4.9" fill="#ddd3c8"/>
<rect x="236.0" y="138.4" width="3.9" height="2.5" fill="#dbd0c4"/>
<rect x="244.1" y="139.7" width="4.5" height="4.2" fill="#ddd3c8"/>
<rect x="258.5" y="138.5" width="5.9" height="5.4" fill="#ddd3c8"/>
<rect x="264.4" y="138.1" width="3.1" height="2.3" fill="#ddd3c8"/>
<rect x="230.1" y="146.1" width="3.3" height="2.2" fill="#dbd0c4"/>
<rect x="264.8" y="145.8" width="3.3" height="3.7" fill="#ddd3c8"/>
<rect x="271.5" y="146.0" width="2.6" height="6.0" fill="#ddd3c8"/>
<rect x="150.1" y="55.4" width="4.5" height="2.1" fill="#dfd6cc"/>
<rect x="157.9" y="55.2" width="4.6" height="4.2" fill="#dbd0c4"/>
<rect x="165.2" y="56.0" width="4.6" height="3.9" fill="#dbd0c4"/>
<rect x="150.7" y="61.1" width="4.5" height="5.0" fill="#dbd0c4"/>
<rect x="165.3" y="62.1" width="4.6" height="5.3" fill="#ddd3c8"/>
<rect x="151.7" y="68.7" width="4.5" height="3.1" fill="#dbd0c4"/>
<rect x="158.9" y="69.1" width="4.3" height="6.0" fill="#ddd3c8"/>
<rect x="165.3" y="68.3" width="4.1" height="5.3" fill="#ddd3c8"/>
<rect x="118.7" y="140.1" width="5.8" height="5.4" fill="#dfd6cc"/>
<rect x="124.8" y="141.4" width="5.3" height="5.3" fill="#ddd3c8"/>
<rect x="132.0" y="140.9" width="3.5" height="4.7" fill="#dfd6cc"/>
<rect x="110.2" y="148.3" width="3.6" height="6.0" fill="#dfd6cc"/>
<rect x="124.7" y="148.0" width="4.1" height="2.0" fill="#ddd3c8"/>
<rect x="131.5" y="148.1" width="3.5" height="3.4" fill="#dbd0c4"/>
<rect x="111.4" y="154.5" width="3.0" height="4.4" fill="#dbd0c4"/>
<rect x="118.1" y="155.0" width="3.0" height="5.3" fill="#ddd3c8"/>
<rect x="125.2" y="154.7" width="2.5" height="5.8" fill="#dbd0c4"/>
<rect x="132.5" y="155.9" width="3.8" height="3.5" fill="#dfd6cc"/>
<ellipse cx="183.2" cy="105.3" rx="11.5" ry="13.5" fill="#d6c9ba"/><rect x="175.7" y="94.3" width="15" height="21" rx="7" fill="#c7dfa2"/>
<path d="M180.1 0.0 L208.1 35.8 L226.8 62.2 L231.4 97.0" fill="none" stroke="#b3c9d3" stroke-width="0.9" stroke-linejoin="round" stroke-linecap="round" />
<path d="M231.4 96.0 L243.9 124.0 L275.0 131.8" fill="none" stroke="#b3c9d3" stroke-width="0.9" stroke-linejoin="round" stroke-linecap="round" />
<path d="M275.0 134.9 L340.3 133.3 L351.2 141.1 L355.9 156.7 L374.5 159.8 L415.0 153.5" fill="none" stroke="#b3c9d3" stroke-width="1.0" stroke-linejoin="round" stroke-linecap="round" />
<path d="M135.0 6.2 L158.3 37.3 L169.2 65.3 L170.8 97.0" fill="none" stroke="#a59c94" stroke-width="0.6" stroke-linejoin="round" stroke-linecap="round" />
<path d="M304.5 1.6 L295.2 23.3 L307.7 54.4" fill="none" stroke="#a59c94" stroke-width="0.5" stroke-linejoin="round" stroke-linecap="round" />
<path d="M0.0 142.7 L40.4 120.9 L62.2 120.1 L87.1 130.2 L108.9 131.8 L140.0 119.3" fill="none" stroke="#a59c94" stroke-width="0.6" stroke-linejoin="round" stroke-linecap="round" />
<path d="M12.4 0.0 L7.8 31.1 L3.1 59.1 L0.0 73.1" fill="none" stroke="#ffffff" stroke-width="1.45" stroke-linejoin="round" stroke-linecap="round" />
<path d="M0.0 20.2 L15.6 15.6 L38.9 8.6 L57.5 0.8" fill="none" stroke="#ffffff" stroke-width="1.45" stroke-linejoin="round" stroke-linecap="round" />
<path d="M38.9 8.6 L45.1 31.1 L51.3 51.3 L58.3 69.2" fill="none" stroke="#ffffff" stroke-width="1.45" stroke-linejoin="round" stroke-linecap="round" />
<path d="M27.2 52.9 L28.8 33.4 L31.1 30.3 L44.3 28.0" fill="none" stroke="#ffffff" stroke-width="1.45" stroke-linejoin="round" stroke-linecap="round" />
<path d="M0.0 61.4 L9.3 62.2 L27.2 56.8 L51.3 50.5" fill="none" stroke="#ffffff" stroke-width="1.45" stroke-linejoin="round" stroke-linecap="round" />
<path d="M0.0 84.8 L31.1 79.3 L58.3 70.0 L105.8 56.8" fill="none" stroke="#ffffff" stroke-width="1.45" stroke-linejoin="round" stroke-linecap="round" />
<path d="M80.9 0.0 L94.9 32.7 L105.8 56.8 L114.3 66.9" fill="none" stroke="#ffffff" stroke-width="1.45" stroke-linejoin="round" stroke-linecap="round" />
<path d="M107.3 0.0 L121.3 24.9 L126.0 32.7" fill="none" stroke="#ffffff" stroke-width="1.45" stroke-linejoin="round" stroke-linecap="round" />
<path d="M126.0 33.4 L140.0 36.5" fill="none" stroke="#ffffff" stroke-width="1.45" stroke-linejoin="round" stroke-linecap="round" />
<path d="M129.1 37.3 L138.4 52.9 L136.9 60.7 L115.1 68.4" fill="none" stroke="#ffffff" stroke-width="1.45" stroke-linejoin="round" stroke-linecap="round" />
<path d="M114.3 66.9 L115.9 74.7 L93.3 87.1 L73.1 97.0" fill="none" stroke="#ffffff" stroke-width="1.45" stroke-linejoin="round" stroke-linecap="round" />
<path d="M9.3 97.0 L38.9 88.6 L68.4 84.0 L93.3 89.4 L96.4 97.0" fill="none" stroke="#ffffff" stroke-width="1.45" stroke-linejoin="round" stroke-linecap="round" />
<path d="M108.9 97.0 L140.0 85.5" fill="none" stroke="#ffffff" stroke-width="1.45" stroke-linejoin="round" stroke-linecap="round" />
<path d="M15.6 87.1 L16.3 97.0" fill="none" stroke="#ffffff" stroke-width="1.45" stroke-linejoin="round" stroke-linecap="round" />
<path d="M135.0 35.0 L170.8 40.7" fill="none" stroke="#ffffff" stroke-width="1.45" stroke-linejoin="round" stroke-linecap="round" />
<path d="M172.3 45.1 L169.2 97.0" fill="none" stroke="#ffffff" stroke-width="1.45" stroke-linejoin="round" stroke-linecap="round" />
<path d="M152.1 38.9 L166.1 65.3 L163.0 97.0" fill="none" stroke="#ffffff" stroke-width="1.45" stroke-linejoin="round" stroke-linecap="round" />
<path d="M191.0 35.8 L205.0 68.4 L217.4 97.0" fill="none" stroke="#ffffff" stroke-width="1.45" stroke-linejoin="round" stroke-linecap="round" />
<path d="M207.3 68.4 L229.9 58.3" fill="none" stroke="#ffffff" stroke-width="1.45" stroke-linejoin="round" stroke-linecap="round" />
<path d="M229.9 58.3 L251.6 97.0" fill="none" stroke="#ffffff" stroke-width="1.45" stroke-linejoin="round" stroke-linecap="round" />
<path d="M215.9 80.9 L237.6 70.0" fill="none" stroke="#ffffff" stroke-width="1.45" stroke-linejoin="round" stroke-linecap="round" />
<path d="M219.0 94.9 L243.9 84.0" fill="none" stroke="#ffffff" stroke-width="1.45" stroke-linejoin="round" stroke-linecap="round" />
<path d="M249.3 11.2 L265.6 62.2 L275.0 59.9" fill="none" stroke="#ffffff" stroke-width="1.45" stroke-linejoin="round" stroke-linecap="round" />
<path d="M250.1 31.1 L256.3 31.1" fill="none" stroke="#ffffff" stroke-width="1.45" stroke-linejoin="round" stroke-linecap="round" />
<path d="M200.3 49.8 L209.7 46.7" fill="none" stroke="#ffffff" stroke-width="1.45" stroke-linejoin="round" stroke-linecap="round" />
<path d="M215.9 37.3 L222.1 45.1 L226.0 42.0" fill="none" stroke="#ffffff" stroke-width="1.45" stroke-linejoin="round" stroke-linecap="round" />
<path d="M135.0 46.7 L141.2 51.3 L139.7 65.3" fill="none" stroke="#ffffff" stroke-width="1.45" stroke-linejoin="round" stroke-linecap="round" />
<path d="M139.7 87.1 L144.3 74.7 L136.6 62.2" fill="none" stroke="#ffffff" stroke-width="1.45" stroke-linejoin="round" stroke-linecap="round" />
<path d="M275.0 42.0 L306.1 28.8 L349.7 6.2 L355.9 0.0" fill="none" stroke="#ffffff" stroke-width="1.45" stroke-linejoin="round" stroke-linecap="round" />
<path d="M376.1 51.3 L415.0 35.8" fill="none" stroke="#ffffff" stroke-width="1.45" stroke-linejoin="round" stroke-linecap="round" />
<path d="M383.9 73.1 L415.0 59.1" fill="none" stroke="#ffffff" stroke-width="1.45" stroke-linejoin="round" stroke-linecap="round" />
<path d="M376.1 38.9 L415.0 14.0" fill="none" stroke="#ffffff" stroke-width="1.45" stroke-linejoin="round" stroke-linecap="round" />
<path d="M275.0 62.2 L284.3 79.3 L290.6 97.0" fill="none" stroke="#ffffff" stroke-width="1.45" stroke-linejoin="round" stroke-linecap="round" />
<path d="M284.3 79.3 L315.4 78.5 L326.3 93.3" fill="none" stroke="#ffffff" stroke-width="1.45" stroke-linejoin="round" stroke-linecap="round" />
<path d="M349.7 51.3 L352.8 62.2 L371.4 59.1" fill="none" stroke="#ffffff" stroke-width="1.45" stroke-linejoin="round" stroke-linecap="round" />
<path d="M387.0 87.1 L415.0 74.7" fill="none" stroke="#ffffff" stroke-width="1.45" stroke-linejoin="round" stroke-linecap="round" />
<path d="M15.6 142.7 L35.8 127.1 L62.2 125.5 L63.8 139.5 L59.1 166.0 L51.3 170.7" fill="none" stroke="#ffffff" stroke-width="1.45" stroke-linejoin="round" stroke-linecap="round" />
<path d="M28.0 148.9 L102.6 147.3" fill="none" stroke="#ffffff" stroke-width="1.45" stroke-linejoin="round" stroke-linecap="round" />
<path d="M108.9 150.4 L140.0 142.7" fill="none" stroke="#ffffff" stroke-width="1.45" stroke-linejoin="round" stroke-linecap="round" />
<path d="M63.8 110.0 L74.7 118.6 L96.4 107.7 L140.0 96.0" fill="none" stroke="#ffffff" stroke-width="1.45" stroke-linejoin="round" stroke-linecap="round" />
<path d="M91.8 96.0 L102.6 110.0 L118.2 122.4 L140.0 114.7" fill="none" stroke="#ffffff" stroke-width="1.45" stroke-linejoin="round" stroke-linecap="round" />
<path d="M31.1 96.0 L38.9 102.2 L62.2 96.0" fill="none" stroke="#ffffff" stroke-width="1.45" stroke-linejoin="round" stroke-linecap="round" />
<path d="M0.0 110.0 L20.2 105.3" fill="none" stroke="#ffffff" stroke-width="1.45" stroke-linejoin="round" stroke-linecap="round" />
<path d="M115.1 162.9 L140.0 150.4" fill="none" stroke="#ffffff" stroke-width="1.45" stroke-linejoin="round" stroke-linecap="round" />
<path d="M108.9 170.7 L122.9 186.2 L140.0 180.0" fill="none" stroke="#ffffff" stroke-width="1.45" stroke-linejoin="round" stroke-linecap="round" />
<path d="M108.9 153.5 L140.0 156.7" fill="none" stroke="#ffffff" stroke-width="1.45" stroke-linejoin="round" stroke-linecap="round" />
<path d="M90.2 147.3 L90.2 162.9 L96.4 159.8" fill="none" stroke="#ffffff" stroke-width="1.45" stroke-linejoin="round" stroke-linecap="round" />
<path d="M0.0 164.4 L9.3 170.7 L31.1 192.4" fill="none" stroke="#ffffff" stroke-width="1.45" stroke-linejoin="round" stroke-linecap="round" />
<path d="M31.1 180.0 L51.3 170.7 L51.3 193.0" fill="none" stroke="#ffffff" stroke-width="1.45" stroke-linejoin="round" stroke-linecap="round" />
<path d="M135.0 116.2 L169.2 96.0" fill="none" stroke="#ffffff" stroke-width="1.45" stroke-linejoin="round" stroke-linecap="round" />
<path d="M135.0 125.5 L172.3 96.0" fill="none" stroke="#ffffff" stroke-width="1.45" stroke-linejoin="round" stroke-linecap="round" />
<path d="M135.0 145.8 L203.4 134.9 L206.5 142.7 L195.7 148.9" fill="none" stroke="#ffffff" stroke-width="1.45" stroke-linejoin="round" stroke-linecap="round" />
<path d="M135.0 155.1 L194.1 149.7 L215.9 189.3 L219.0 193.0" fill="none" stroke="#ffffff" stroke-width="1.45" stroke-linejoin="round" stroke-linecap="round" />
<path d="M147.4 162.9 L200.3 158.2" fill="none" stroke="#ffffff" stroke-width="1.45" stroke-linejoin="round" stroke-linecap="round" />
<path d="M167.7 127.1 L177.0 193.0" fill="none" stroke="#ffffff" stroke-width="1.45" stroke-linejoin="round" stroke-linecap="round" />
<path d="M145.9 155.1 L146.7 193.0" fill="none" stroke="#ffffff" stroke-width="1.45" stroke-linejoin="round" stroke-linecap="round" />
<path d="M200.3 153.5 L222.1 147.3" fill="none" stroke="#ffffff" stroke-width="1.45" stroke-linejoin="round" stroke-linecap="round" />
<path d="M203.4 162.9 L225.2 156.7" fill="none" stroke="#ffffff" stroke-width="1.45" stroke-linejoin="round" stroke-linecap="round" />
<path d="M206.5 172.2 L228.3 166.0" fill="none" stroke="#ffffff" stroke-width="1.45" stroke-linejoin="round" stroke-linecap="round" />
<path d="M209.7 181.5 L233.0 175.3" fill="none" stroke="#ffffff" stroke-width="1.45" stroke-linejoin="round" stroke-linecap="round" />
<path d="M214.3 150.4 L222.1 169.1 L234.5 193.0" fill="none" stroke="#ffffff" stroke-width="1.45" stroke-linejoin="round" stroke-linecap="round" />
<path d="M222.1 96.0 L240.8 141.1" fill="none" stroke="#ffffff" stroke-width="1.45" stroke-linejoin="round" stroke-linecap="round" />
<path d="M250.1 96.0 L264.1 127.1 L275.0 147.3" fill="none" stroke="#ffffff" stroke-width="1.45" stroke-linejoin="round" stroke-linecap="round" />
<path d="M240.8 170.7 L275.0 153.5" fill="none" stroke="#ffffff" stroke-width="1.45" stroke-linejoin="round" stroke-linecap="round" />
<path d="M320.1 96.0 L324.8 108.4 L383.9 100.7 L390.1 111.6" fill="none" stroke="#ffffff" stroke-width="1.45" stroke-linejoin="round" stroke-linecap="round" />
<path d="M306.1 122.4 L362.1 127.1 L415.0 99.1" fill="none" stroke="#ffffff" stroke-width="1.45" stroke-linejoin="round" stroke-linecap="round" />
<path d="M293.7 96.0 L317.0 159.8 L321.7 186.2" fill="none" stroke="#ffffff" stroke-width="1.45" stroke-linejoin="round" stroke-linecap="round" />
<path d="M275.0 128.7 L299.9 129.4" fill="none" stroke="#ffffff" stroke-width="1.45" stroke-linejoin="round" stroke-linecap="round" />
<path d="M275.0 183.1 L307.7 164.4 L337.2 164.4 L362.1 186.2" fill="none" stroke="#ffffff" stroke-width="1.45" stroke-linejoin="round" stroke-linecap="round" />
<path d="M379.2 116.2 L390.1 133.3 L404.1 127.1" fill="none" stroke="#ffffff" stroke-width="1.45" stroke-linejoin="round" stroke-linecap="round" />
<path d="M281.2 139.5 L284.3 166.0 L275.0 176.9" fill="none" stroke="#ffffff" stroke-width="1.45" stroke-linejoin="round" stroke-linecap="round" />
<path d="M318.5 141.1 L337.2 141.1" fill="none" stroke="#ffffff" stroke-width="1.45" stroke-linejoin="round" stroke-linecap="round" />
<path d="M180.1 38.1 L206.5 32.7 L249.3 11.2 L275.0 0.0" fill="none" stroke="#ffffff" stroke-width="2.0" stroke-linejoin="round" stroke-linecap="round" />
<path d="M349.7 0.0 L365.2 34.2" fill="none" stroke="#ffffff" stroke-width="3.0" stroke-linejoin="round" stroke-linecap="round" />
<path d="M159.9 0 L174.7 35.8 L180.1 46.7 L187.9 65.3 L201.9 96 L211.2 116.2 L222.1 142.7 L243.9 193" fill="none" stroke="#fff" stroke-width="4.1" stroke-linejoin="round"/>
<path d="M210.9 116.2 L367.2 37.9 L371.4 31.1 L398.8 0" fill="none" stroke="#fff" stroke-width="3.9" stroke-linejoin="round"/>
<path d="M367.2 37.9 L415 125" fill="none" stroke="#fff" stroke-width="4.0"/>
<path d="M91.8 193.0 L107.3 148.9 L140.0 130.2" fill="none" stroke="#ffffff" stroke-width="3.6" stroke-linejoin="round" stroke-linecap="round" />
<path d="M135.0 134.9 L166.1 127.1 L203.4 117.8 L210.9 116.2" fill="none" stroke="#ffffff" stroke-width="3.6" stroke-linejoin="round" stroke-linecap="round" />
<circle cx="175.4" cy="40.7" r="4.2" fill="#e6ddd7" stroke="#fff" stroke-width="1.8"/>
<circle cx="367.5" cy="37.6" r="2.6" fill="#e6ddd7" stroke="#fff" stroke-width="1.8"/>
<circle cx="210.9" cy="116.2" r="2.8" fill="#c4dca0" stroke="#fff" stroke-width="1.8"/>
<circle cx="107.3" cy="148.9" r="2.2" fill="#e6ddd7" stroke="#fff" stroke-width="1.8"/>
<circle cx="126.0" cy="32.7" r="1.6" fill="#e6ddd7" stroke="#fff" stroke-width="1.8"/>
<circle cx="249.3" cy="11.2" r="1.8" fill="#e6ddd7" stroke="#fff" stroke-width="1.8"/>
<text x="23.6" y="58.3" transform="rotate(-12 23.6 58.3)" font-size="5.9" fill="#4f4a45" text-anchor="middle" dominant-baseline="central" textLength="29.4" lengthAdjust="spacingAndGlyphs" stroke="#f4f0ec" stroke-width="1.1" paint-order="stroke" >KENYA RD</text>
<text x="70.3" y="68.4" transform="rotate(-18 70.3 68.4)" font-size="5.9" fill="#4f4a45" text-anchor="middle" dominant-baseline="central" textLength="30.2" lengthAdjust="spacingAndGlyphs" stroke="#f4f0ec" stroke-width="1.1" paint-order="stroke" >ELGON RD</text>
<text x="67.7" y="89.2" transform="rotate(-12 67.7 89.2)" font-size="5.9" fill="#4f4a45" text-anchor="middle" dominant-baseline="central" textLength="47" lengthAdjust="spacingAndGlyphs" stroke="#f4f0ec" stroke-width="1.1" paint-order="stroke">MATUMBATO RD</text>
<text x="88.6" y="16.6" transform="rotate(61 88.6 16.6)" font-size="5.9" fill="#4f4a45" text-anchor="middle" dominant-baseline="central" textLength="38" lengthAdjust="spacingAndGlyphs" stroke="#f4f0ec" stroke-width="1.1" paint-order="stroke" >PER HILL RD</text>
<text x="114.3" y="11.7" transform="rotate(60 114.3 11.7)" font-size="5.9" fill="#4f4a45" text-anchor="middle" dominant-baseline="central" textLength="24" lengthAdjust="spacingAndGlyphs" stroke="#f4f0ec" stroke-width="1.1" paint-order="stroke" >HILL RD</text>
<text x="13.2" y="8.6" transform="rotate(-80 13.2 8.6)" font-size="5.9" fill="#4f4a45" text-anchor="middle" dominant-baseline="central" letter-spacing="0.3" stroke="#f4f0ec" stroke-width="1.1" paint-order="stroke" >ATI RD</text>
<text x="4.7" y="18.4" transform="rotate(-20 4.7 18.4)" font-size="5.9" fill="#4f4a45" text-anchor="middle" dominant-baseline="central" letter-spacing="0.3" stroke="#f4f0ec" stroke-width="1.1" paint-order="stroke" >RD</text>
<text x="3.9" y="84.0" transform="rotate(20 3.9 84.0)" font-size="5.9" fill="#4f4a45" text-anchor="middle" dominant-baseline="central" letter-spacing="0.3" stroke="#f4f0ec" stroke-width="1.1" paint-order="stroke" >RD</text>
<text x="167.7" y="13.2" transform="rotate(-115 167.7 13.2)" font-size="5.9" fill="#4f4a45" text-anchor="middle" dominant-baseline="central" letter-spacing="0.3" stroke="#f4f0ec" stroke-width="1.1" paint-order="stroke" >UHURU HWY</text>
<text x="224.4" y="23.6" transform="rotate(-27 224.4 23.6)" font-size="5.9" fill="#4f4a45" text-anchor="middle" dominant-baseline="central" textLength="40" lengthAdjust="spacingAndGlyphs" stroke="#f4f0ec" stroke-width="1.1" paint-order="stroke" >BUNYALA RD</text>
<text x="264.1" y="4.7" transform="rotate(-23 264.1 4.7)" font-size="5.9" fill="#4f4a45" text-anchor="middle" dominant-baseline="central" letter-spacing="0.3" stroke="#f4f0ec" stroke-width="1.1" paint-order="stroke" >COMM</text>
<text x="218.5" y="63.3" transform="rotate(-24 218.5 63.3)" font-size="5.9" fill="#4f4a45" text-anchor="middle" dominant-baseline="central" textLength="24.7" lengthAdjust="spacingAndGlyphs" stroke="#f4f0ec" stroke-width="1.1" paint-order="stroke" >HOLA RD</text>
<text x="217.4" y="91.8" transform="rotate(72 217.4 91.8)" font-size="5.9" fill="#4f4a45" text-anchor="middle" dominant-baseline="central" letter-spacing="0.3" stroke="#f4f0ec" stroke-width="1.1" paint-order="stroke" >OHO RD</text>
<text x="309.2" y="25.7" transform="rotate(-28 309.2 25.7)" font-size="5.9" fill="#4f4a45" text-anchor="middle" dominant-baseline="central" textLength="45.9" lengthAdjust="spacingAndGlyphs" stroke="#f4f0ec" stroke-width="1.1" paint-order="stroke" >MACHAKOS RD</text>
<text x="325.1" y="58.6" transform="rotate(-28 325.1 58.6)" font-size="5.9" fill="#4f4a45" text-anchor="middle" dominant-baseline="central" textLength="37.9" lengthAdjust="spacingAndGlyphs" stroke="#f4f0ec" stroke-width="1.1" paint-order="stroke" >LUSAKA RD</text>
<text x="385.4" y="12.8" transform="rotate(-50 385.4 12.8)" font-size="5.9" fill="#4f4a45" text-anchor="middle" dominant-baseline="central" textLength="21" lengthAdjust="spacingAndGlyphs" stroke="#f4f0ec" stroke-width="1.1" paint-order="stroke" >LUSAKA</text>
<text x="385.4" y="73.1" transform="rotate(62 385.4 73.1)" font-size="5.9" fill="#4f4a45" text-anchor="middle" dominant-baseline="central" textLength="50" lengthAdjust="spacingAndGlyphs" stroke="#f4f0ec" stroke-width="1.1" paint-order="stroke" >ENTERPRISE RD</text>
<text x="399.4" y="42.8" transform="rotate(-27 399.4 42.8)" font-size="5.9" fill="#4f4a45" text-anchor="middle" dominant-baseline="central" textLength="38" lengthAdjust="spacingAndGlyphs" stroke="#f4f0ec" stroke-width="1.1" paint-order="stroke" >ADDIS ABABA</text>
<text x="407.2" y="24.1" transform="rotate(-55 407.2 24.1)" font-size="5.9" fill="#4f4a45" text-anchor="middle" dominant-baseline="central" letter-spacing="0.3" stroke="#f4f0ec" stroke-width="1.1" paint-order="stroke" >ATHI RIV</text>
<text x="407.2" y="61.4" transform="rotate(-25 407.2 61.4)" font-size="5.9" fill="#4f4a45" text-anchor="middle" dominant-baseline="central" letter-spacing="0.3" stroke="#f4f0ec" stroke-width="1.1" paint-order="stroke" >BAMB</text>
<text x="11.7" y="117.8" transform="rotate(-50 11.7 117.8)" font-size="5.9" fill="#4f4a45" text-anchor="middle" dominant-baseline="central" textLength="33" lengthAdjust="spacingAndGlyphs" stroke="#f4f0ec" stroke-width="1.1" paint-order="stroke" >NSI GARDEN</text>
<text x="113" y="99" transform="rotate(-27 113 99)" font-size="5.9" fill="#4f4a45" text-anchor="middle" dominant-baseline="central" textLength="37" lengthAdjust="spacingAndGlyphs" stroke="#f4f0ec" stroke-width="1.1" paint-order="stroke">KIAMBERE RD</text>
<text x="73.1" y="145.5" transform="rotate(-4 73.1 145.5)" font-size="5.9" fill="#4f4a45" text-anchor="middle" dominant-baseline="central" textLength="50" lengthAdjust="spacingAndGlyphs" stroke="#f4f0ec" stroke-width="1.1" paint-order="stroke" >OLE SANGALE RD</text>
<text x="91.8" y="183.1" transform="rotate(-68 91.8 183.1)" font-size="5.9" fill="#4f4a45" text-anchor="middle" dominant-baseline="central" letter-spacing="0.3" stroke="#f4f0ec" stroke-width="1.1" paint-order="stroke" >ATA RD</text>
<text x="152.8" y="101.2" transform="rotate(-57 152.8 101.2)" font-size="5.9" fill="#4f4a45" text-anchor="middle" dominant-baseline="central" textLength="32" lengthAdjust="spacingAndGlyphs" stroke="#f4f0ec" stroke-width="1.1" paint-order="stroke">MASABA RD</text>
<text x="160.7" y="98.8" transform="rotate(-57 160.7 98.8)" font-size="5.9" fill="#4f4a45" text-anchor="middle" dominant-baseline="central" textLength="50" lengthAdjust="spacingAndGlyphs" stroke="#f4f0ec" stroke-width="1.1" paint-order="stroke">AERODROME ROAD</text>
<text x="156.0" y="129.0" transform="rotate(-14 156.0 129.0)" font-size="5.9" fill="#4f4a45" text-anchor="middle" dominant-baseline="central" textLength="43.6" lengthAdjust="spacingAndGlyphs" stroke="#f4f0ec" stroke-width="1.1" paint-order="stroke" >LANGATA RD</text>
<text x="162.5" y="140.3" transform="rotate(-12 162.5 140.3)" font-size="5.9" fill="#4f4a45" text-anchor="middle" dominant-baseline="central" textLength="34" lengthAdjust="spacingAndGlyphs" stroke="#f4f0ec" stroke-width="1.1" paint-order="stroke" >KISAUNI RD</text>
<text x="141" y="156.3" transform="rotate(-6 141 156.3)" font-size="5.9" fill="#4f4a45" text-anchor="middle" dominant-baseline="central" textLength="33" lengthAdjust="spacingAndGlyphs" stroke="#f4f0ec" stroke-width="1.1" paint-order="stroke">GANDHI RD</text>
<text x="173.1" y="163.2" transform="rotate(-10 173.1 163.2)" font-size="5.9" fill="#4f4a45" text-anchor="middle" dominant-baseline="central" textLength="33" lengthAdjust="spacingAndGlyphs" stroke="#f4f0ec" stroke-width="1.1" paint-order="stroke" >BUKANI RD</text>
<text x="233.0" y="124.8" transform="rotate(66 233.0 124.8)" font-size="5.9" fill="#4f4a45" text-anchor="middle" dominant-baseline="central" textLength="29" lengthAdjust="spacingAndGlyphs" stroke="#f4f0ec" stroke-width="1.1" paint-order="stroke" >WITU RD</text>
<text x="267.2" y="112.3" transform="rotate(-25 267.2 112.3)" font-size="5.9" fill="#4f4a45" text-anchor="middle" dominant-baseline="central" letter-spacing="0.3" stroke="#f4f0ec" stroke-width="1.1" paint-order="stroke" >POKO</text>
<text x="345.3" y="110.0" transform="rotate(5 345.3 110.0)" font-size="5.9" fill="#4f4a45" text-anchor="middle" dominant-baseline="central" textLength="32" lengthAdjust="spacingAndGlyphs" stroke="#f4f0ec" stroke-width="1.1" paint-order="stroke" >BUTERE RD</text>
<text x="341.6" y="124.5" transform="rotate(5 341.6 124.5)" font-size="5.9" fill="#4f4a45" text-anchor="middle" dominant-baseline="central" textLength="52" lengthAdjust="spacingAndGlyphs" stroke="#f4f0ec" stroke-width="1.1" paint-order="stroke" >DAR ES SALAM RD</text>
<text x="294.0" y="171.9" transform="rotate(-32 294.0 171.9)" font-size="5.9" fill="#4f4a45" text-anchor="middle" dominant-baseline="central" textLength="34" lengthAdjust="spacingAndGlyphs" stroke="#f4f0ec" stroke-width="1.1" paint-order="stroke" >KABRAS RD</text>
<text x="319.3" y="172.2" transform="rotate(85 319.3 172.2)" font-size="5.9" fill="#4f4a45" text-anchor="middle" dominant-baseline="central" textLength="28" lengthAdjust="spacingAndGlyphs" stroke="#f4f0ec" stroke-width="1.1" paint-order="stroke" >MUKENIA</text>
<text x="284.3" y="103.0" transform="rotate(-30 284.3 103.0)" font-size="5.9" fill="#4f4a45" text-anchor="middle" dominant-baseline="central" letter-spacing="0.3" stroke="#f4f0ec" stroke-width="1.1" paint-order="stroke" >MO RD</text>
<text x="-0.2" y="153.5" font-size="8.2" fill="#6e6862" dominant-baseline="central" textLength="65" lengthAdjust="spacingAndGlyphs" stroke="#efe9e3" stroke-width="0.8" paint-order="stroke">Madaraka Estate</text>
<text x="-3.1" y="187.0" font-size="7" fill="#555" dominant-baseline="central" textLength="31" lengthAdjust="spacingAndGlyphs" stroke="#efe9e3" stroke-width="0.8" paint-order="stroke">Strathmore</text>
<text x="135.0" y="173.4" font-size="8.4" fill="#6e6862" dominant-baseline="central" textLength="51" lengthAdjust="spacingAndGlyphs" stroke="#efe9e3" stroke-width="0.8" paint-order="stroke">Nairobi West</text>
<text x="309.2" y="152.8" font-size="6.9" fill="#5e5852" dominant-baseline="central" textLength="50.5" lengthAdjust="spacingAndGlyphs" stroke="#efe9e3" stroke-width="0.8" paint-order="stroke">Mater Hospital</text>
<rect x="181.7" y="72.3" width="23" height="9.5" rx="1.2" fill="#fff" stroke="#9a9a9a" stroke-width="0.7"/><text x="193.2" y="77.4" font-size="6.2" font-weight="bold" fill="#333" text-anchor="middle" dominant-baseline="central">A104</text>
<path d="M208.1 97.5 C205.1 92.0 201.9 88.0 201.9 83.0 A6.2 6.2 0 1 1 214.3 83.0 C214.3 88.0 211.1 92.0 208.1 97.5Z" fill="#7a7a7a" opacity=".9"/><circle cx="208.1" cy="82.5" r="4.6" fill="#2e2e2e"/>
<rect x="7.8" y="145.8" width="20.2" height="40.4" rx="2" fill="#fff" stroke="#bdbdbd" stroke-width="1"/><line x1="8.3" y1="165.8" x2="27.5" y2="165.8" stroke="#ddd" stroke-width="0.8"/>
<rect x="13.7" y="154.6" width="8.4" height="1.9" fill="#222"/><rect x="16.95" y="151.3" width="1.9" height="8.5" fill="#222"/><rect x="14.2" y="175.3" width="7.4" height="1.7" fill="#222"/>
<rect x="226" y="185.5" width="189" height="7.5" fill="#ffffff" opacity=".6"/>
<text x="414" y="189.6" font-size="6.4" fill="#333" text-anchor="end" dominant-baseline="central" textLength="187" lengthAdjust="spacingAndGlyphs">© OpenStreetMap, © Mapbox | Improve the underlying map</text>
</svg></div>
<div class="a" style="left:364px;top:637px;width:519px;height:154px;background:#f8f8f8;box-shadow:0 1px 2px rgba(0,0,0,.3)"></div>
<div class="a" style="left:364px;top:684px;width:519px;height:32px;background:#fff;border-top:1px solid #e6e6e6;border-bottom:1px solid #e6e6e6"></div>
<div class="a" style="left:584px;top:714px;width:77px;height:1.2px;background:#f3c44a"></div>
<div class="t" style="left:415.00px;top:652.98px;font-size:16.03px;letter-spacing:0.000px;transform:scaleX(0.8790);transform-origin:0 0;color:#333;">Tasks</div>
<div class="t" style="left:598.90px;top:694.69px;font-size:9.49px;letter-spacing:0.000px;transform:scaleX(0.9028);transform-origin:0 0;color:#333;">Sample task</div>
<div class="t" style="left:415.00px;top:731.39px;font-size:11.68px;letter-spacing:0.000px;transform:scaleX(0.8655);transform-origin:0 0;color:#383838;">Task complete</div>
<div class="t" style="left:415.00px;top:754.72px;font-size:9.31px;letter-spacing:0.000px;transform:scaleX(0.8565);transform-origin:0 0;color:#444;">Yes</div>
<div class="a" style="left:850px;top:755px;width:37.5px;height:41px;overflow:hidden"><div class="a" style="left:7.3px;top:10.8px;width:34px;height:34px;border-radius:50%;background:#fbbf2e;box-shadow:0 0 2px rgba(0,0,0,.25)"></div><div class="a" style="left:19.8px;top:26.9px;width:11px;height:2.8px;background:#222"></div><div class="a" style="left:23.9px;top:22.8px;width:2.8px;height:11px;background:#222"></div></div>
<div class="pink" style="left:405px;top:234px;width:189.5px;height:72.5px"></div>
<div class="pink" style="left:399.5px;top:327.5px;width:453.5px;height:262.3px"></div>
<div class="pink" style="left:356.5px;top:625px;width:537.5px;height:178px"></div>
</body></html>
